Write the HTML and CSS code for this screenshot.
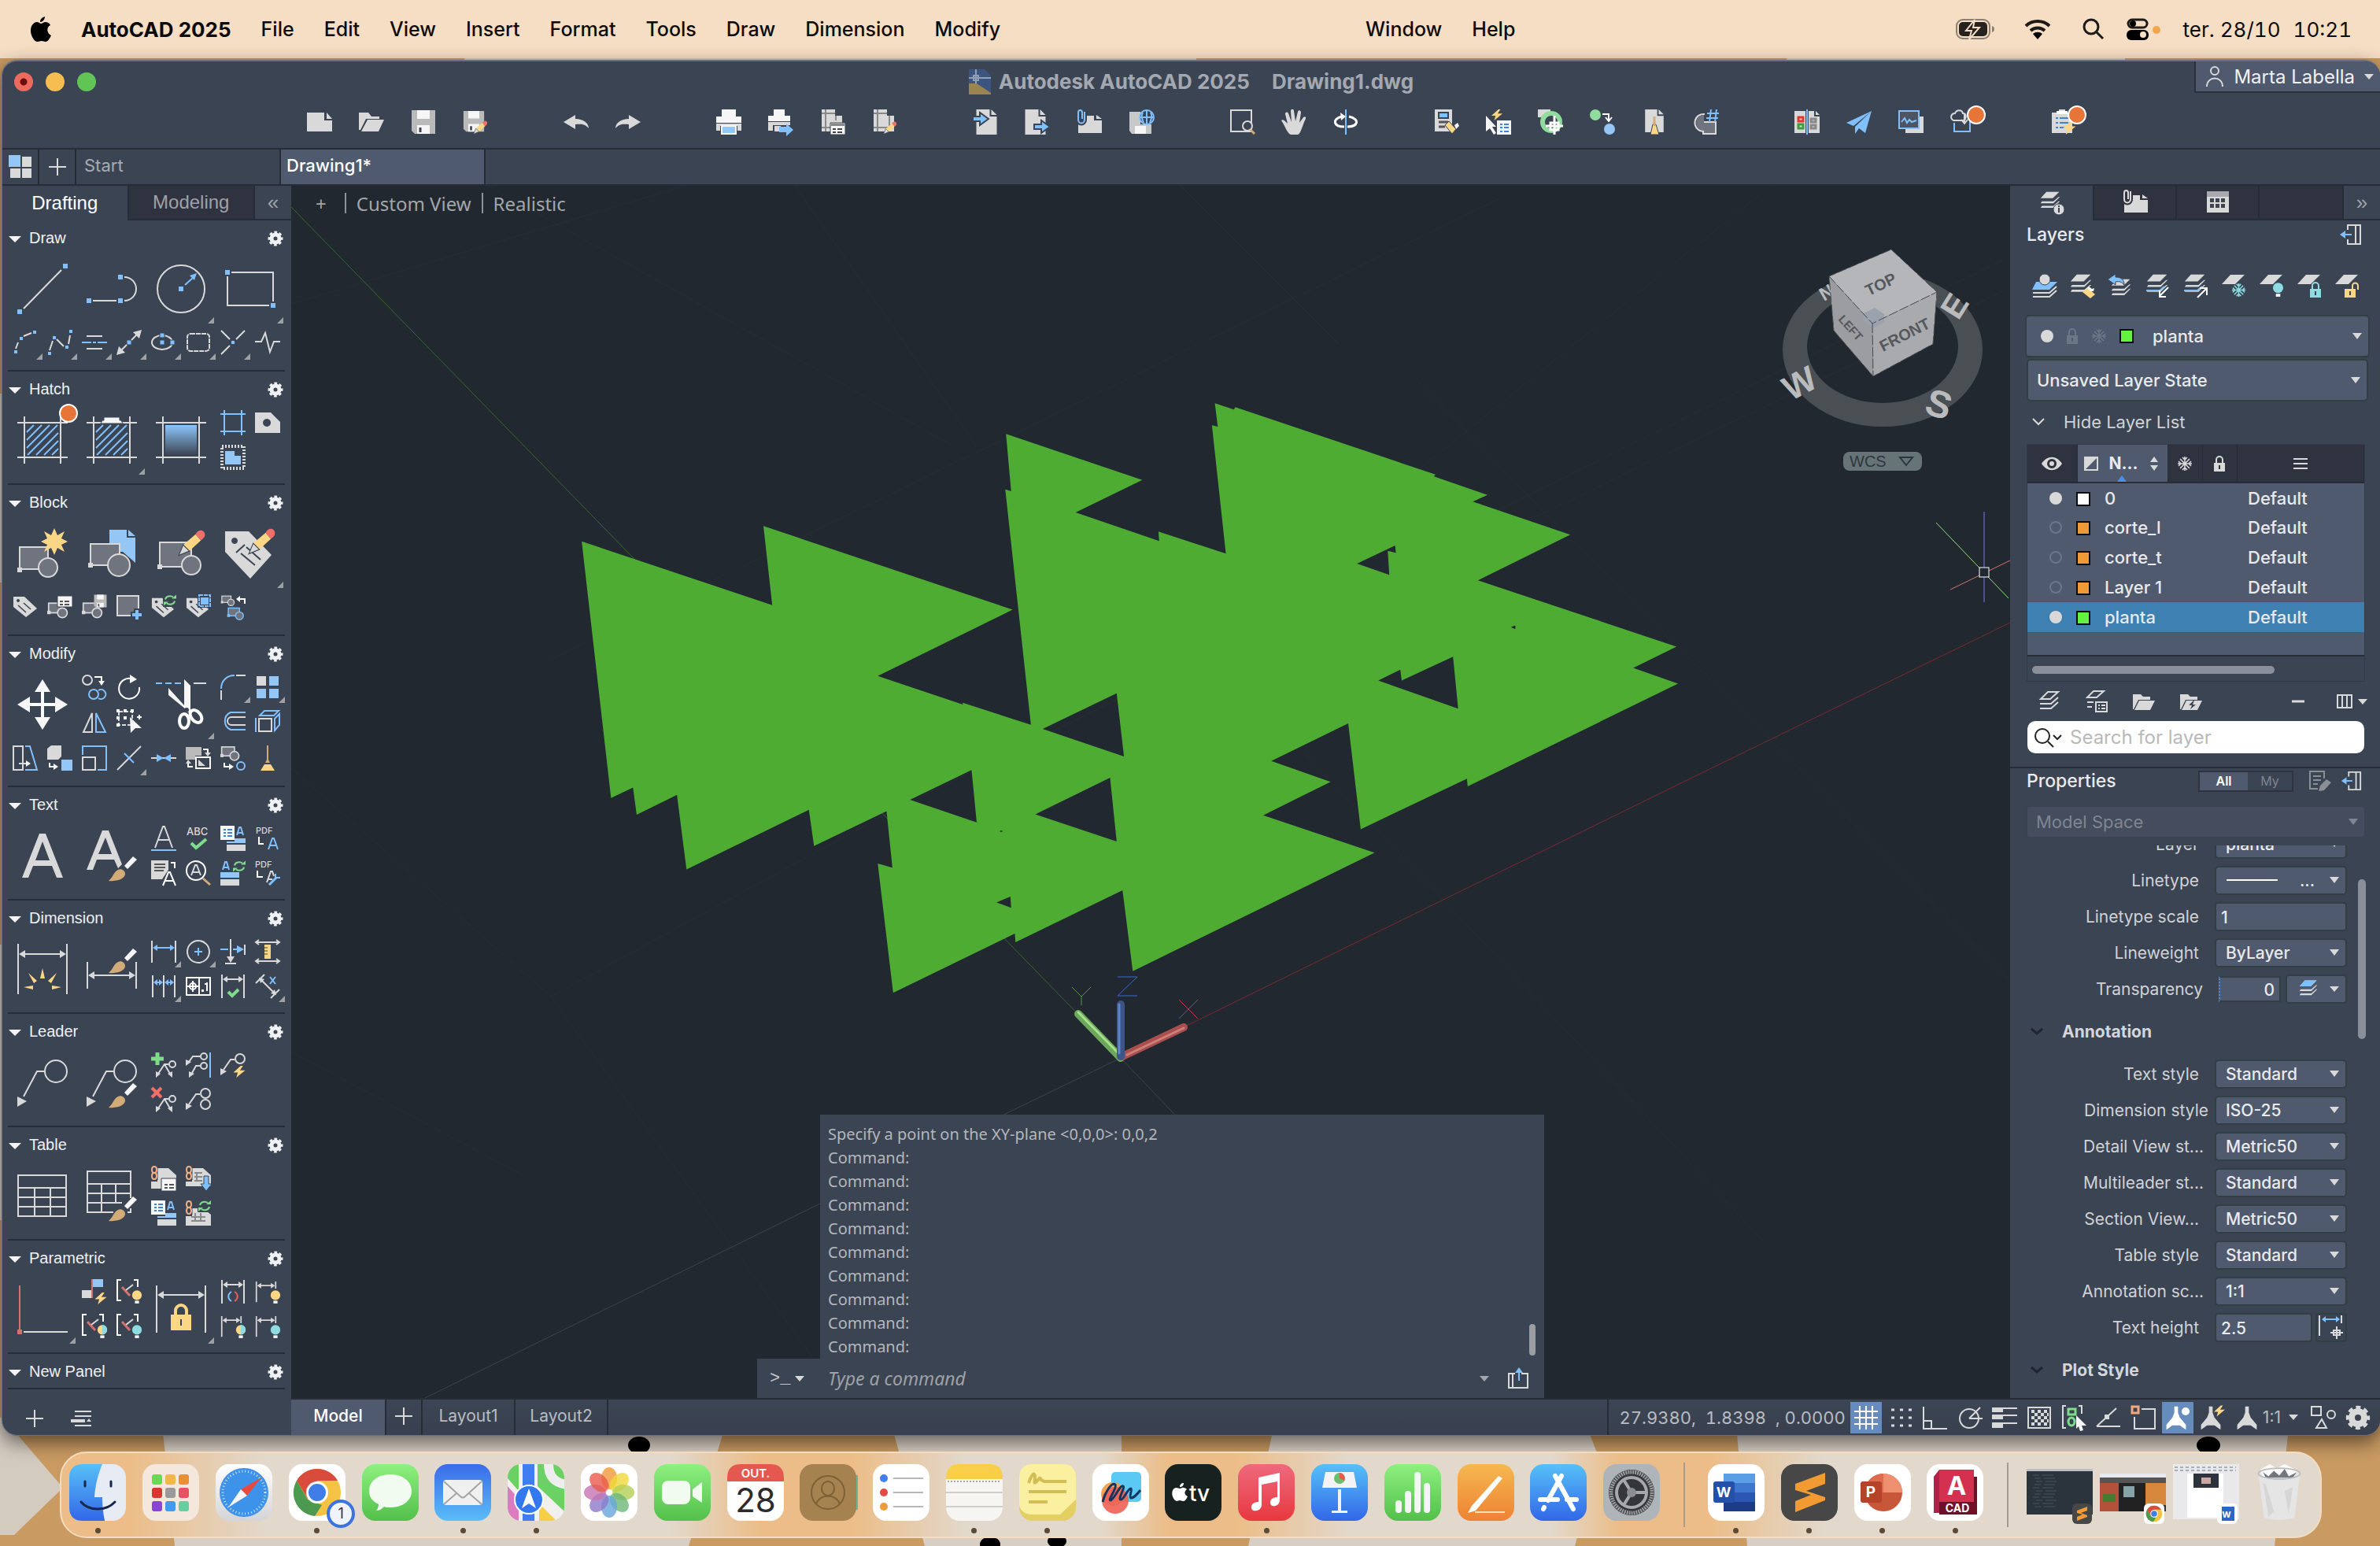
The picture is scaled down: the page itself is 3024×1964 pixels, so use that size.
FILE: index.html
```html
<!DOCTYPE html>
<html lang="pt">
<head>
<meta charset="utf-8">
<title>Autodesk AutoCAD 2025 - Drawing1.dwg</title>
<link rel="stylesheet" href="styles.css">
</head>
<body>
<svg class="defs" aria-hidden="true">
  <symbol id="gear" viewBox="0 0 20 20"><circle cx="10" cy="10" r="5" fill="none" stroke="currentColor" stroke-width="5"/><circle cx="10" cy="10" r="8" fill="none" stroke="currentColor" stroke-width="3" stroke-dasharray="3.6 2.68" stroke-dashoffset="1.8"/></symbol>
  <symbol id="brush" viewBox="0 0 36 32"><path class="fi-t" d="M0 31C6 26 6 20 12 17c4-2 9 1 9 5 0 7-12 10-21 9z"/><path class="fi-w" d="M20 12L31 0l5 4-12 12z"/></symbol>
  <symbol id="pencil" viewBox="0 0 32 32"><path class="fi-y" d="M6 17L20 5l6 7-13 12z"/><path class="fi-r" d="M20 5c3-5 7-5 9-3s3 6-3 10z"/><path fill="#d9d9d9" stroke="#3b4453" d="M6 17l7 7-12 5z"/></symbol>
  <symbol id="floppy" viewBox="0 0 32 32"><path fill="#bababa" d="M1 1h30v30H5l-4-4z"/><path class="fi-w" d="M8 1h16v11H8zM8 20h16v11H8z"/><path stroke="#3b4453" stroke-width="3" d="M12 23v6"/></symbol>
  <symbol id="sync" viewBox="0 0 16 14"><g fill="none" stroke="#7edc8b" stroke-width="2"><path d="M2 6a6 5 0 0 1 10-3M14 8a6 5 0 0 1-10 3"/></g><path fill="#7edc8b" d="M10 5h6V0zM6 9H0v5z"/></symbol>
  <symbol id="bolt" viewBox="0 0 16 16"><path class="fi-y" d="M10 0L0 9h6l-2 7L16 6H9l4-6z"/></symbol>
  <symbol id="block" viewBox="0 0 32 24"><rect x="2" y="2" width="20" height="14" fill="#70747f" stroke="currentColor" stroke-width="2"/><circle cx="22" cy="16" r="7" fill="#70747f" stroke="currentColor" stroke-width="2"/><path fill="currentColor" d="M0 13h5v5H0z"/></symbol>
  <symbol id="doc" viewBox="0 0 26 32"><path class="fi" d="M0 0h17v9h9v23H0zM19 0l7 7h-7z"/></symbol>
  <symbol id="tag" viewBox="0 0 32 28"><path class="fi" fill-rule="evenodd" d="M1 1h14l16 15-14 11L1 14zM7 4a2 2 0 1 0 .1 0z"/><path stroke="#3b4453" stroke-width="1.5" d="M7 12l10 9M14 9l9 8"/></symbol>
  <symbol id="layers" viewBox="0 0 32 32"><path class="fi" d="M10 2h20L20 12H1zM3 17h18l8-7h2L21 20H1zM3 24h18l8-7h2L21 27H1z"/></symbol>
  <symbol id="snow" viewBox="0 0 20 20"><g fill="none" stroke="currentColor" stroke-width="1.6"><path d="M10 1v18M1 10h18M4 4l12 12M16 4L4 16M7 2l3 3 3-3M7 18l3-3 3 3M2 7l3 3-3 3M18 7l-3 3 3 3"/></g></symbol>
  <symbol id="lock" viewBox="0 0 16 20"><path fill="currentColor" fill-rule="evenodd" d="M1 9h14v11H1zM7 12v5h2v-5z"/><path fill="none" stroke="currentColor" stroke-width="2" d="M4 9V5a4 4 0 0 1 8 0v4"/></symbol>
  <symbol id="bulb" viewBox="0 0 16 20"><circle cx="8" cy="7" r="7" fill="currentColor"/><path class="fi-w" d="M5 15h6v4H5z"/></symbol>
  <symbol id="span" viewBox="0 0 32 32"><path class="ln" d="M2 1v30M30 1v30M6 7h20"/><path class="fi" d="M3 7l6-4v8zM29 7l-6-4v8z"/></symbol>
  <symbol id="exit" viewBox="0 0 28 28"><path class="ln" d="M10 8V2h16v24H10v-6M20 2v24"/><path class="ln-b" d="M6 14h9"/><path class="fi-b" d="M0 14l7-5v10z"/></symbol>
  <symbol id="grid" viewBox="0 0 64 64"><path class="ln" d="M9 2v60M55 2v60M0 10h64M0 54h64"/></symbol>
  <symbol id="person" viewBox="0 0 32 40"><path fill="currentColor" d="M13 1h6v10l3 8 10 12v8l-10-7H10L0 39v-8l10-12 3-8z"/></symbol>
  <symbol id="chrome" viewBox="0 0 64 64"><circle cx="32" cy="32" r="30" fill="#f6c244"/><path fill="#d94b3d" d="M32 2A30 30 0 0 1 58 17H32L20 40 6 17A30 30 0 0 1 32 2z"/><path fill="#4c9a50" d="M6 17l14 24 18 7-9 14A30 30 0 0 1 6 17z"/><circle cx="32" cy="32" r="14" fill="#fff"/><circle cx="32" cy="32" r="11" fill="#3f7ee8"/></symbol>
  <linearGradient id="gGreen" x2="0" y2="1"><stop stop-color="#8ef07f"/><stop offset="1" stop-color="#52c04a"/></linearGradient>
  <linearGradient id="gBlue" x2="0" y2="1"><stop stop-color="#3a6be8"/><stop offset="1" stop-color="#5bbdf8"/></linearGradient>
  <linearGradient id="gSky" x2="0" y2="1"><stop stop-color="#56c0f8"/><stop offset="1" stop-color="#3367e8"/></linearGradient>
  <linearGradient id="gRed" x2="0" y2="1"><stop stop-color="#ee6a7d"/><stop offset="1" stop-color="#e8383f"/></linearGradient>
  <linearGradient id="gOrange" x2="0" y2="1"><stop stop-color="#f6b84f"/><stop offset="1" stop-color="#ee8233"/></linearGradient>
  <linearGradient id="gWhite" x2="0" y2="1"><stop stop-color="#fff"/><stop offset="1" stop-color="#d4d4d6"/></linearGradient>
  <linearGradient id="gHatch" x2="0" y2="1"><stop stop-color="#8cc6fb"/><stop offset="1" stop-color="#3b4453"/></linearGradient>
</svg>

<svg class="wallpaper" viewBox="0 0 3024 1964" preserveAspectRatio="none" aria-hidden="true">
  <rect width="3024" height="1964" fill="#c99a62"/>
  <path fill="#d4cbbf" d="M590 70h930v10H590zM2270 70h430v10h-430zM0 500h10v240H0zM0 1200h10v350H0zM0 1800l20 20 60 70-62 60H0z"/>
  <path fill="#d8cfc4" d="M205 1800h720l-50 164H222zM1130 1800h295v164h-250zM1621 1800h390l20 50-30 114h-415zM2205 1800h705l-20 164h-670z"/>
  <g><ellipse cx="812" cy="1836" rx="14" ry="11"/><ellipse cx="2806" cy="1836" rx="15" ry="11"/><ellipse cx="1258" cy="1962" rx="13" ry="10"/><ellipse cx="1343" cy="1958" rx="12" ry="8"/></g>
</svg>

<nav class="menubar" aria-label="Menu">
  <button class="apple" aria-label="Apple"><svg width="26" height="32" viewBox="0 0 26 32"><path d="M18 0c0 4-3 7-6 7 0-4 3-6 6-7zM13 9c2 0 3-2 6-2 2 0 5 1 6 4-6 3-4 11 1 13-2 4-4 8-7 8-2 0-3-1-5-1s-4 1-5 1C4 32 0 24 0 18c0-7 4-11 8-11 2 0 4 2 5 2z"/></svg></button>
  <button class="appname">AutoCAD 2025</button><button>File</button><button>Edit</button><button>View</button><button>Insert</button><button>Format</button><button>Tools</button><button>Draw</button><button>Dimension</button><button>Modify</button>
  <span class="notch"></span>
  <button>Window</button><button>Help</button>
  <div class="menu-extras">
    <svg width="50" height="26" viewBox="0 0 50 26"><rect x="1" y="1" width="42" height="24" rx="8" fill="none" stroke="#8c8073" stroke-width="2"/><rect x="4" y="4" width="36" height="18" rx="5" fill="#26221e"/><path fill="#26221e" stroke="#f5dec3" stroke-width="2" d="M24 1L13 15h7l-3 11 13-15h-8z"/><path fill="#8c8073" d="M46 9c4 1 4 7 0 8z"/></svg>
    <svg class="wifi" width="34" height="26" viewBox="0 0 34 26"><g fill="none" stroke="#1d1a17" stroke-width="4"><path d="M2 9a22 22 0 0 1 30 0M8 15a13 13 0 0 1 18 0"/></g><path d="M11 19a9 9 0 0 1 12 0l-6 7z"/></svg>
    <svg class="find" width="28" height="28" viewBox="0 0 28 28"><circle cx="11" cy="11" r="9" fill="none" stroke="#1d1a17" stroke-width="3"/><path stroke="#1d1a17" stroke-width="3" d="M18 18l8 8"/></svg>
    <svg class="cc" width="42" height="28" viewBox="0 0 42 28"><rect x="2" y="2" width="24" height="10" rx="5" fill="none" stroke="#1d1a17" stroke-width="3"/><circle cx="8" cy="7" r="4"/><rect y="15" width="28" height="13" rx="6"/><circle cx="21" cy="21" r="4" fill="#f5dec3"/><circle cx="38" cy="15" r="5" fill="#f2a64c"/></svg>
    <time class="clock"><span>ter. 28/10</span><span>10:21</span></time>
  </div>
</nav>

<main class="window">
  <header class="titlebar">
    <div class="lights"><button class="light close" aria-label="Close"></button><button class="light min" aria-label="Minimize"></button><button class="light max" aria-label="Zoom"></button></div>
    <h1 class="title"><svg width="28" height="32" viewBox="0 0 28 32"><path fill="#3b5580" d="M0 0h20l8 8v22L10 18H0z"/><path fill="#9b8450" d="M0 18h10l18 12v2H0z"/><path fill="none" stroke="#8fa0b5" stroke-width="2" d="M9 0v18M0 11h28M6 8h6v6H6z"/></svg><span>Autodesk AutoCAD 2025</span><span class="file">Drawing1.dwg</span></h1>
    <button class="user"><svg width="24" height="28" viewBox="0 0 24 28"><circle class="ln" cx="12" cy="7" r="5"/><path class="ln" d="M2 27c0-14 20-14 20 0"/></svg>Marta Labella<i class="caret"></i></button>
  </header>

  <div class="toolbar" role="toolbar" aria-label="Quick access">
    <div class="tgroup">
      <button aria-label="New"><svg viewBox="0 0 32 32"><path class="fi" d="M0 4h22v10h10v14H0zM25 4l7 8h-7z"/></svg></button>
      <button aria-label="Open"><svg viewBox="0 0 32 32"><path class="fi" d="M0 4h12l4 5h10v3H9L2 26H0zM11 13h21l-7 15H3z"/></svg></button>
      <button aria-label="Save"><svg viewBox="0 0 32 32"><use href="#floppy"/></svg></button>
      <button aria-label="Save as"><svg viewBox="0 0 32 32"><use href="#floppy" width="28" height="30"/><use href="#pencil" x="13" y="14" width="19" height="19"/></svg></button>
    </div>
    <div class="tgroup">
      <button aria-label="Undo"><svg viewBox="0 0 32 32"><path class="fi" d="M0 16L15 7v5c10 0 17 5 17 12-4-5-8-6-17-5v6z"/></svg></button>
      <button aria-label="Redo"><svg viewBox="0 0 32 32"><path class="fi" d="M32 16L17 7v5C7 12 0 17 0 24c4-5 8-6 17-5v6z"/></svg></button>
    </div>
    <div class="tgroup">
      <button aria-label="Plot"><svg viewBox="0 0 32 32"><path class="fi-w" d="M7 0h18v9h7v8H0V9h7z"/><path class="fi" d="M0 18h32v9h-5v-6H5v6H0z"/><path class="fi-w" d="M6 20h20v12H6z"/><path class="fi-l" d="M8 22h16v8H8z"/></svg></button>
      <button aria-label="Batch plot"><svg viewBox="0 0 32 32"><path class="fi-w" d="M7 0h14v8h7v7H0V8h7z"/><path class="fi" d="M0 16h28v4H6v7H0zM8 21h8v7H8z"/><path class="fi-b" d="M14 22h9v-4l9 8-9 8v-5h-9z"/></svg></button>
      <button aria-label="Page setup"><svg viewBox="0 0 32 32"><path class="fi" d="M2 0h17v8h9v20H2z"/><path stroke="#8a8a8a" stroke-width="2" d="M7 0v28M2 5h17M2 23h12M20 8v6"/><path class="fi-w" stroke="#3b4453" d="M13 17h19v15H13z"/><path fill="#888" d="M14 18h17v3H14z"/><path stroke="#444" stroke-width="2" stroke-dasharray="4 2 6" d="M16 25h12M16 29h12"/></svg></button>
      <button aria-label="Page edit"><svg viewBox="0 0 32 32"><path class="fi" d="M2 0h17v8h9v20H2z"/><path stroke="#8a8a8a" stroke-width="2" d="M7 0v28M2 5h17M2 23h24M22 8v16"/><use href="#pencil" x="14" y="15" width="18" height="18"/></svg></button>
    </div>
    <div class="tgroup">
      <button aria-label="Import"><svg viewBox="0 0 32 32"><use href="#doc" x="4" width="27" height="32"/><path class="fi-b" stroke="#3b4453" stroke-width="2" d="M0 9h9V4l11 8-11 8v-5H0z"/></svg></button>
      <button aria-label="Export"><svg viewBox="0 0 32 32"><use href="#doc" width="27" height="32"/><path class="fi-b" stroke="#3b4453" stroke-width="2" d="M12 19h9v-5l11 8-11 8v-5h-9z"/></svg></button>
      <button aria-label="Attach"><svg viewBox="0 0 32 32"><path class="fi" d="M2 18h8V8h12v6h10v16H2zM25 7l7 5h-7z"/><path fill="none" stroke="#3b4453" stroke-width="6" d="M10 3v10c0 6-8 6-8 0V4"/><path class="ln-b" d="M10 3v10c0 6-8 6-8 0V4c0-4 5-4 5 0v8"/></svg></button>
      <button aria-label="Save to web"><svg viewBox="0 0 32 32"><path fill="#c8c8c8" d="M1 3h14v16h14v12H4l-3-4z"/><path class="fi-w" d="M8 21h14v10H8z"/><circle cx="23" cy="10" r="9" fill="#3b4453" stroke="#80c0ff" stroke-width="2"/><path class="ln-b" d="M23 1v18M14 10h18M18 4c-3 5 0 10 1 13M28 4c3 5 0 10-1 13"/></svg></button>
    </div>
    <div class="tgroup">
      <button aria-label="Zoom window"><svg viewBox="0 0 32 32"><rect class="ln" x="2" y="1" width="26" height="27"/><circle cx="23" cy="21" r="6" fill="#3b4453" stroke="#d9d9d9" stroke-width="2"/><path stroke="#d2ab78" stroke-width="3" d="M27 26l5 5"/></svg></button>
      <button aria-label="Pan"><svg viewBox="0 0 32 32"><path class="fi" d="M0 14c2-2 4 0 8 4L5 6c0-3 3-3 4-1l4 11-1-14c0-3 4-3 4 0l2 13 3-12c1-3 4-2 4 1l-2 13 5-7c2-2 4 0 3 2-4 7-6 19-10 20H12C7 30 5 21 0 14z"/></svg></button>
      <button aria-label="Orbit"><svg viewBox="0 0 32 32"><path class="ln-b" d="M16 0v32"/><path fill="none" stroke="#fff" stroke-width="3" d="M11 9C-2 12 0 22 14 22M20 9c14 3 12 13-2 13"/><path class="fi-w" d="M9 4l7 5-6 5z"/></svg></button>
    </div>
    <div class="tgroup">
      <button aria-label="Properties match"><svg viewBox="0 0 32 32"><path class="fi" d="M1 0h22v28H1z"/><path class="fi-b" stroke="#3b4453" stroke-width="2" d="M6 4h12v7H6z"/><path stroke="#555" stroke-width="3" d="M6 16h12M6 22h8"/><path class="fi-y" stroke="#3b4453" d="M14 20l5-5 9 10-5 6z"/><path class="fi-w" d="M26 20l4-3 2 4-4 4z"/></svg></button>
      <button aria-label="Quick select"><svg viewBox="0 0 32 32"><use href="#bolt" x="6" width="16" height="14"/><path class="fi-w" d="M0 8l13 14H8l5 8-3 2-5-8-5 4z"/><path class="fi-w" d="M14 14h18v18H14z"/><path class="dash-b" d="M18 19h11M18 23h11M18 28h11"/></svg></button>
      <button aria-label="Geographic location"><svg viewBox="0 0 32 32"><path class="fi" d="M0 0h16v10H0z"/><circle cx="17" cy="16" r="11" fill="#3b4453" stroke="#8fdc9c" stroke-width="6"/><path stroke="#fff" stroke-width="3" d="M21 8v24M10 21h22M16 17h10v9H16z" fill="none"/></svg></button>
      <button aria-label="Convert"><svg viewBox="0 0 32 32"><circle cx="7" cy="7" r="7" fill="#8fdc9c"/><circle cx="25" cy="25" r="7" class="fi-l"/><path fill="none" stroke="#fff" stroke-width="2" d="M16 6h8v8M20 10l4 5 4-5"/></svg></button>
      <button aria-label="Purge"><svg viewBox="0 0 32 32"><use href="#doc" x="2" width="28" height="29"/><path class="fi-y" stroke="#3b4453" d="M11 32l3-13h4l4 13z"/><path stroke="#d2ab78" stroke-width="3" d="M16 9v12"/></svg></button>
      <button aria-label="Count"><svg viewBox="0 0 32 32"><path class="ln" d="M14 6a11 11 0 1 0 9 14M12 16h16v15H12z"/><path fill="#70747f" d="M13 7a10 10 0 0 0 0 20zM13 17h14v13H13z"/><path stroke="#3b4453" stroke-width="14" d="M25 0v15"/><path class="ln-b" d="M22 0l-2 16M29 0l-2 16M17 5h15M16 11h15"/></svg></button>
    </div>
    <div class="tgroup">
      <button aria-label="Compare"><svg viewBox="0 0 32 32"><path class="fi" d="M0 2h14v28H0zM18 2h7v7h7v21H18zM27 2l5 5h-5z"/><path stroke="#80c0ff" stroke-width="2" d="M16 0v32"/><path fill="none" stroke="#e4352c" stroke-width="3" d="M5 10h6v5H5z"/><path fill="none" stroke="#3c9b3c" stroke-width="3" d="M5 19h6v5H5z"/><path fill="none" stroke="#888" stroke-width="3" d="M21 12h6v4h-6zM21 20h6v4h-6z"/></svg></button>
      <button aria-label="Share"><svg viewBox="0 0 32 32"><path class="fi-b" d="M32 2L0 17l9 4zM32 2L11 22v9l5-7 8 6z"/></svg></button>
      <button aria-label="Traces"><svg viewBox="0 0 32 32"><path class="fi" d="M9 9h23v21H9z"/><path fill="#4d5563" stroke="#80c0ff" stroke-width="2" d="M1 2h25v22H1z"/><path class="ln-b" d="M4 16l4-5 3 6 3-4 3 3 6-2"/></svg></button>
      <button class="dot" aria-label="Cloud import"><svg viewBox="0 0 32 32"><path class="ln" d="M4 14c-5-3-3-9 2-9 2-5 9-5 10 0 5 0 5 8 0 9z"/><path class="ln-b" d="M5 17v11h20V10"/><path class="ln" d="M18 5v12M14 13l4 5 4-5"/></svg></button>
    </div>
    <div class="tgroup">
      <button class="dot" aria-label="Activity insights"><svg viewBox="0 0 32 32"><path class="fi" d="M1 4h9V0h8v4h9v26H1z"/><path stroke="#fff" stroke-width="4" d="M7 4h14"/><path class="dash-b" d="M6 11h16M6 17h16M6 23h12"/><use href="#bolt" x="14" y="15" width="18" height="17"/></svg></button>
    </div>
  </div>

  <div class="doctabs">
    <button class="dt-icon" aria-label="All drawings"><svg width="30" height="30" viewBox="0 0 30 30"><path class="fi-l" d="M0 0h15v15H0z"/><path class="fi" d="M17 2h12v13H17zM2 17h13v12H2zM17 17h12v12H17z"/></svg></button>
    <button class="dt-icon" aria-label="New drawing"><svg width="22" height="22" viewBox="0 0 22 22"><path class="ln" d="M11 0v22M0 11h22"/></svg></button>
    <button class="dt">Start</button>
    <button class="dt on">Drawing1*</button>
  </div>

  <div class="work">
    <aside class="tools">
      <div class="ttabs"><button class="on">Drafting</button><button>Modeling</button><button class="fold" aria-label="Collapse">«</button></div>

      <section><h2>Draw<svg><use href="#gear"/></svg></h2>
        <div class="cells">
          <button class="big" aria-label="Line"><svg viewBox="0 0 64 64"><path class="ln" d="M8 57L56 8"/><path class="fi-b" d="M0 58h6v6H0zM58 0h6v6h-6z"/></svg></button>
          <button class="big" aria-label="Polyline"><svg viewBox="0 0 64 64"><path class="ln" d="M8 47h30M48 17a15 15 0 0 1 0 30"/><path class="fi-b" d="M0 44h6v6H0zM40 44h6v6h-6zM40 14h6v6h-6z"/></svg></button>
          <button class="big fly" aria-label="Circle"><svg viewBox="0 0 64 64"><circle class="ln" cx="32" cy="32" r="30"/><path class="ln-b" d="M37 27l10-9"/><path class="fi-b" d="M29 29h6v6h-6zM52 12l-3 9-6-6z"/></svg></button>
          <button class="big fly" aria-label="Rectangle"><svg viewBox="0 0 64 64"><path class="ln" d="M8 11h53v37M3 16v37h53"/><path class="fi-b" d="M0 8h6v6H0zM58 50h6v6h-6z"/></svg></button>
          <button class="fly" aria-label="Arc"><svg viewBox="0 0 32 32"><path class="ln" d="M4 24l3-8M14 8l10-4"/><path class="fi-b" d="M2 26h4v4H2zM9 9h4v4H9zM26 1h4v4h-4z"/></svg></button>
          <button class="fly" aria-label="Spline"><svg viewBox="0 0 32 32"><path class="ln" d="M3 26l4-12M12 12l9 9M27 18l2-11"/><path class="fi-b" d="M1 28h4v4H1zM7 8h4v4H7zM23 20h4v4h-4zM28 0h4v4h-4z"/></svg></button>
          <button class="fly" aria-label="Multiline"><svg viewBox="0 0 32 32"><path class="ln" d="M6 8h20M6 24h20"/><path class="ln-b" stroke-dasharray="12 2 4 2" d="M0 16h32"/></svg></button>
          <button class="fly" aria-label="Ray"><svg viewBox="0 0 32 32"><path class="ln" d="M6 26L26 6"/><path class="fi" d="M0 32l3-11 8 8zM32 0l-3 11-8-8z"/><path class="fi-b" stroke="#3b4453" d="M13 13h6v6h-6z"/></svg></button>
          <button class="fly" aria-label="Ellipse"><svg viewBox="0 0 32 32"><ellipse class="ln" cx="14" cy="16" rx="13" ry="9"/><path class="fi-b" stroke="#3b4453" d="M11 4h6v6h-6zM11 13h6v6h-6zM24 13h6v6h-6z"/></svg></button>
          <button class="fly" aria-label="Revision cloud"><svg viewBox="0 0 32 32"><rect class="ln" x="2" y="5" width="28" height="22" rx="4" stroke-dasharray="6 1"/></svg></button>
          <button class="fly" aria-label="Construction"><svg viewBox="0 0 32 32"><path class="ln" d="M1 1l11 11M31 1L20 12M1 31l11-11"/><path class="fi-b" d="M14 14h4v4h-4z"/></svg></button>
          <button aria-label="Break line"><svg viewBox="0 0 32 32"><path class="ln" d="M0 15h8l5-11 6 24 5-13h8"/></svg></button>
        </div></section>

      <section><h2>Hatch<svg><use href="#gear"/></svg></h2>
        <div class="cells">
          <button class="big dot2" aria-label="Hatch"><svg viewBox="0 0 64 64"><use href="#grid"/><path class="ln-b" d="M12 22l9-9M12 32l19-19M12 42l29-29M13 51l38-38M24 51l28-28M34 51l18-18M44 51l8-8"/></svg></button>
          <button class="big fly" aria-label="Hatch edit"><svg viewBox="0 0 64 64"><use href="#grid"/><path class="ln-b" d="M12 22l9-9M12 32l19-19M12 42l29-29M13 51l38-38M24 51l28-28M34 51l18-18M44 51l8-8"/><path class="fi-w" stroke="#3b4453" d="M18 11l2-4h2V3h20v4h2l2 4z"/></svg></button>
          <button class="big" aria-label="Gradient"><svg viewBox="0 0 64 64"><path fill="url(#gHatch)" d="M12 13h40v38H12z"/><use href="#grid"/></svg></button>
          <button aria-label="Boundary"><svg viewBox="0 0 32 32"><path class="ln-b" d="M5 0v32M27 0v32M0 5h32M0 27h32"/></svg></button>
          <button aria-label="Wipeout"><svg viewBox="0 0 32 32"><path class="fi" fill-rule="evenodd" d="M0 3h20l12 12v14H0zM15 11a5 5 0 1 0 .1 0z"/></svg></button>
          <button aria-label="Region"><svg viewBox="0 0 32 32"><rect x="2" y="2" width="28" height="28" fill="none" stroke="#d9d9d9" stroke-width="4" stroke-dasharray="2 2"/><path class="fi-l" d="M6 8h12v6h8v11H6z"/></svg></button>
        </div></section>

      <section><h2>Block<svg><use href="#gear"/></svg></h2>
        <div class="cells">
          <button class="big" aria-label="Create block"><svg viewBox="0 0 64 64"><rect x="3" y="24" width="36" height="28" fill="#70747f" stroke="#d9d9d9" stroke-width="2"/><circle cx="39" cy="50" r="12" fill="#70747f" stroke="#d9d9d9" stroke-width="2"/><path class="fi" d="M0 50h6v6H0z"/><path class="fi-y" d="M47 0l4 9 9-5-4 9 8 4-8 4 4 9-9-5-4 9-4-9-9 5 4-9-8-4 8-4-4-9 9 5z"/></svg></button>
          <button class="big" aria-label="Insert block"><svg viewBox="0 0 64 64"><path class="fi-l" d="M29 2h22v10h11v32l-16-14H29zM53 2l9 8h-9z"/><rect x="5" y="20" width="37" height="27" fill="#70747f" stroke="#d9d9d9" stroke-width="2"/><circle cx="41" cy="47" r="14" fill="#70747f" stroke="#d9d9d9" stroke-width="2"/><path class="fi" d="M2 44h6v6H2z"/></svg></button>
          <button class="big" aria-label="Edit block"><svg viewBox="0 0 64 64"><rect x="5" y="18" width="40" height="31" fill="#70747f" stroke="#d9d9d9" stroke-width="2"/><circle cx="45" cy="47" r="12" fill="#70747f" stroke="#d9d9d9" stroke-width="2"/><path class="fi" d="M2 46h6v6H2z"/><use href="#pencil" x="28" y="2" width="36" height="36"/></svg></button>
          <button class="big fly" aria-label="Define attribute"><svg viewBox="0 0 64 64"><path class="fi" fill-rule="evenodd" d="M0 4h30l29 30-27 30L0 30zM12 12a4 4 0 1 0 .1 0z"/><path stroke="#3b4453" stroke-width="2" d="M14 31l11-10M20 32l18 15M27 24l18 16"/><use href="#pencil" x="29" y="0" width="36" height="36"/></svg></button>
          <button aria-label="Attribute"><svg viewBox="0 0 32 32"><use href="#tag" y="2" width="32" height="28"/></svg></button>
          <button aria-label="Attribute manager"><svg class="c" viewBox="0 0 32 32"><use href="#block" y="8" width="28" height="24"/><path class="fi-w" stroke="#3b4453" d="M13 2h19v14H13z"/><path stroke="#555" stroke-width="2" stroke-dasharray="4 2 6" d="M16 9h12M16 13h12"/></svg></button>
          <button aria-label="Write block"><svg class="c" viewBox="0 0 32 32"><use href="#block" y="8" width="28" height="24"/><use href="#floppy" x="15" width="17" height="17"/></svg></button>
          <button aria-label="Base point"><svg viewBox="0 0 32 32"><rect x="1" y="2" width="27" height="25" fill="#70747f" stroke="#d9d9d9" stroke-width="2"/><path stroke="#3b4453" stroke-width="8" d="M26 18v14M18 26h14"/><path stroke="#80c0ff" stroke-width="4" d="M26 20v12M20 26h12"/></svg></button>
          <button aria-label="Sync attributes"><svg viewBox="0 0 32 32"><use href="#tag" y="3" width="30" height="28"/><path fill="#3b4453" d="M15 0h17v16H15z"/><use href="#sync" x="16" y="0" width="16" height="15"/></svg></button>
          <button aria-label="Retain display"><svg viewBox="0 0 32 32"><use href="#tag" y="3" width="30" height="28"/><path fill="#3b4453" d="M15 0h17v17H15z"/><path class="fi-b" d="M19 4h10v9H19z"/><path class="ln-b" stroke-dasharray="5 1" d="M17 1h14v14H17z"/></svg></button>
          <button aria-label="Replace block"><svg class="c" viewBox="0 0 32 32"><use href="#block" y="1" width="20" height="14"/><use class="cb" href="#block" x="8" y="16" width="24" height="17"/><path class="ln-w" d="M22 6h9v6"/><path class="fi-w" d="M20 6l5-4v8z"/></svg></button>
        </div></section>

      <section><h2>Modify<svg><use href="#gear"/></svg></h2>
        <div class="cells">
          <button class="big" aria-label="Move"><svg viewBox="0 0 64 64"><path stroke="#fff" stroke-width="4" d="M32 8v48M8 32h48"/><path class="fi-w" d="M32 0l10 16H22zM32 64l10-16H22zM0 32l16-10v20zM64 32L48 22v20z"/></svg></button>
          <button aria-label="Copy"><svg viewBox="0 0 32 32"><circle class="ln" cx="7" cy="7" r="6"/><circle class="ln-b" cx="15" cy="25" r="6"/><path class="ln-b" d="M21 20a6 6 0 1 1 0 10"/><path class="ln-w" d="M16 3h9v9"/><path class="fi-w" d="M21 8h8l-4 6z"/></svg></button>
          <button aria-label="Rotate"><svg viewBox="0 0 32 32"><path class="ln-w" d="M19 5A13 13 0 1 0 29 16"/><path class="fi-w" d="M17 0l9 6-9 5z"/></svg></button>
          <button class="big fly" aria-label="Trim"><svg viewBox="0 0 64 64"><path class="ln-b" stroke-dasharray="8 4" d="M0 5h32"/><path class="ln" d="M48 5h16"/><path class="fi-w" d="M36 0l8 8v34h-6V38L16 20v-9l20 22z"/><ellipse cx="36" cy="53" rx="6" ry="9" fill="none" stroke="#fff" stroke-width="4"/><ellipse cx="51" cy="47" rx="6" ry="9" transform="rotate(-40 51 47)" fill="none" stroke="#fff" stroke-width="4"/><circle cx="39" cy="39" r="3" fill="#3b4453"/></svg></button>
          <button class="fly" aria-label="Fillet"><svg viewBox="0 0 32 32"><path class="ln-b" d="M1 18C1 8 8 1 18 1"/><path class="ln" d="M20 1h12M1 20v12"/></svg></button>
          <button class="fly" aria-label="Array"><svg viewBox="0 0 32 32"><path class="fi" d="M2 2h12v12H2z"/><path class="fi-l" d="M18 2h12v12H18zM2 18h12v12H2zM18 18h12v12H18z"/></svg></button>
          <button aria-label="Mirror"><svg viewBox="0 0 32 32"><path class="ln" d="M13 5v24H2z"/><path class="ln-b" d="M18 5v24h12z"/></svg></button>
          <button aria-label="Stretch"><svg viewBox="0 0 32 32"><path class="ln" stroke-dasharray="5 2" d="M3 3h17v17H3z"/><path class="fi-w" d="M0 0h4v4H0zM9 0h4v4H9zM18 0h4v4h-4zM0 9h4v4H0zM9 9h4v4H9zM0 18h4v4H0zM17 10l15 14h-8l-6 6zM26 9h6v2h-6z"/><path class="ln-w" d="M29 7v6"/></svg></button>
          <button aria-label="Offset"><svg viewBox="0 0 32 32"><path class="ln-b" d="M32 4H13a12 12 0 0 0 0 22h19"/><path class="ln" d="M32 10H14a5 5 0 0 0 0 10h18"/></svg></button>
          <button aria-label="Solid edit"><svg viewBox="0 0 32 32"><path class="ln" d="M5 12h16v16H5z"/><path class="ln-b" d="M1 11v18M6 8l6-6h18l-6 6zM25 12l6-6v14l-6 7z"/></svg></button>
          <button aria-label="Taper"><svg viewBox="0 0 32 32"><path class="ln" d="M1 1h12v30H1zM8 23h12"/><path class="ln-b" d="M16 1h6l9 30H16"/><path class="fi-w" d="M17 19l6 4-6 4z"/></svg></button>
          <button aria-label="Change space"><svg viewBox="0 0 32 32"><path class="fi" d="M0 4l5-4h13v14l-4 4H0z"/><path class="fi-l" d="M18 18h14v14H18z"/><path class="ln-w" d="M3 22v5h7"/><path class="fi-w" d="M8 23l6 4-6 4z"/></svg></button>
          <button aria-label="Scale"><svg viewBox="0 0 32 32"><path class="ln" d="M1 15h16v16H1z"/><path class="ln-b" d="M1 12V1h30v30H20"/></svg></button>
          <button class="fly" aria-label="Break"><svg viewBox="0 0 32 32"><path class="ln" d="M1 31L31 1"/><path class="ln-b" d="M10 10l12 12"/></svg></button>
          <button aria-label="Join"><svg viewBox="0 0 32 32"><path class="ln" d="M0 16h32"/><path class="fi-b" d="M7 11l9 5-9 5zM25 11l-9 5 9 5z"/></svg></button>
          <button aria-label="Draw order"><svg viewBox="0 0 32 32"><path fill="#bababa" d="M0 2h20v11H12v5H0z"/><path class="ln-w" d="M13 15h18v14H13zM22 5h6v6M9 27H3v-5"/><path class="fi" d="M16 18l9 8h-9zM24 9h8l-4 5zM0 23h7l-4-5z"/></svg></button>
          <button aria-label="Explode"><svg class="c" viewBox="0 0 32 32"><use href="#block" width="26" height="20"/><circle class="ln-b" cx="26" cy="26" r="5"/><path class="ln-w" d="M5 22v5h8"/><path class="fi-w" d="M11 23l6 4-6 4z"/></svg></button>
          <button aria-label="Overkill"><svg viewBox="0 0 32 32"><path stroke="#d2ab78" stroke-width="2" d="M16 0v19"/><path fill="#d2ab78" d="M13 22l3-6 3 6z"/><path class="fi-y" d="M12 24h8l5 8H7z"/></svg></button>
        </div></section>

      <section><h2>Text<svg><use href="#gear"/></svg></h2>
        <div class="cells">
          <button class="big" aria-label="Multiline text"><svg viewBox="0 0 64 64"><path class="fi" fill-rule="evenodd" d="M6 60L28 4h8l22 56h-8l-6-15H20l-6 15zM23 38h18l-9-24z"/></svg></button>
          <button class="big" aria-label="Text style"><svg viewBox="0 0 64 64"><path class="fi" fill-rule="evenodd" d="M0 50L20 0h8l17 43-5 5-5-11H13L8 50zM15 30h17L24 9z"/><use href="#brush" x="28" y="33" width="36" height="32"/></svg></button>
          <button aria-label="Single line text"><svg viewBox="0 0 32 32"><path class="ln" d="M5 28L15 1h2l10 27M8 18h16"/><path class="ln-b" d="M0 31h32"/></svg></button>
          <button aria-label="Spell check"><svg viewBox="0 0 32 32"><text class="mini" x="1" y="12" font-size="13">ABC</text><path fill="none" stroke="#7edc8b" stroke-width="4" d="M7 22l6 6L26 17"/></svg></button>
          <button aria-label="Text frame"><svg viewBox="0 0 32 32"><path class="fi-w" d="M0 0h18v18H0z"/><path class="dash-b" d="M4 5h11M4 9h11M4 13h11"/><path class="ln-b" d="M21 12l3-10h2l3 10M22 9h6"/><path class="fi-l" d="M8 20h10v-4h14v6H8z"/><path class="fi" d="M8 24h24v8H8z"/></svg></button>
          <button aria-label="PDF to text"><svg viewBox="0 0 32 32"><text class="mini" x="1" y="10" font-size="11">PDF</text><path class="ln-w" d="M5 14v9h6"/><path class="ln-b" d="M17 30l5-14h2l5 14M19 25h8"/></svg></button>
          <button aria-label="Text to mtext"><svg viewBox="0 0 32 32"><path class="fi" d="M0 0h22v12l-8 12H0z"/><path stroke="#555" stroke-width="2" d="M4 5h14M4 9h14M4 13h12"/><path class="ln-w" d="M25 3h5v7M15 32l7-17h2l7 17M18 26h10"/></svg></button>
          <button aria-label="Find text"><svg viewBox="0 0 32 32"><circle class="ln-w" cx="13" cy="13" r="12"/><path class="ln" d="M7 19l5-13h2l5 13M9 15h8"/><path stroke="#d2ab78" stroke-width="3" d="M22 23l9 8"/></svg></button>
          <button aria-label="Update text"><svg viewBox="0 0 32 32"><path class="ln-b" d="M3 12L6 2h2l3 10M4 9h6"/><use href="#sync" x="16" y="0" width="16" height="15"/><path class="fi-l" d="M0 15h24v7H0z"/><path class="fi" d="M0 24h24v8H0z"/></svg></button>
          <button aria-label="PDF settings"><svg viewBox="0 0 32 32"><text class="mini" x="0" y="9" font-size="11">PDF</text><path class="ln-w" d="M3 13v8h7"/><path class="ln" d="M15 28l5-14h2l2 6M17 24h5"/><path stroke="#80c0ff" stroke-width="3" d="M18 31l9-9"/><path class="ln-b" d="M26 17v5h6"/></svg></button>
        </div></section>

      <section><h2>Dimension<svg><use href="#gear"/></svg></h2>
        <div class="cells">
          <button class="big" aria-label="Dimension"><svg viewBox="0 0 64 64"><path class="ln" d="M1 0v64M63 0v64M6 13h52"/><path class="fi" d="M2 13l8-5v10zM62 13l-8-5v10z"/><path class="fi-y" d="M32 31l3 13h-6zM14 37l11 10-4 3zM50 37L39 47l4 3zM8 55l12-2v5zM56 55l-12-2v5z"/></svg></button>
          <button class="big" aria-label="Dimension style"><svg viewBox="0 0 64 64"><path class="ln" d="M1 23v34M63 23v34M6 40h52"/><path class="fi" d="M2 40l8-5v10zM62 40l-8-5v10z"/><use href="#brush" x="28" y="6" width="36" height="32"/></svg></button>
          <button class="fly" aria-label="Linear"><svg viewBox="0 0 32 32"><path class="ln" d="M1 2v28M31 2v28"/><path class="ln-b" d="M5 11h22"/><path class="fi-b" d="M2 11l6-4v8zM30 11l-6-4v8z"/></svg></button>
          <button class="fly" aria-label="Radius"><svg viewBox="0 0 32 32"><circle class="ln" cx="16" cy="16" r="14"/><path class="ln-b" d="M16 11v10M11 16h10"/></svg></button>
          <button aria-label="Adjust space"><svg viewBox="0 0 32 32"><path class="ln" d="M13 0v24M6 31h14M31 7v13"/><path class="ln-b" d="M0 13h10M16 13h8"/><path class="fi-b" d="M21 8l9 5-9 5z"/><path class="fi" d="M8 22h10l-5 8z"/></svg></button>
          <button aria-label="Distance"><svg viewBox="0 0 32 32"><path class="ln" d="M2 4h28M2 28h28M5 1L1 4l4 3M27 1l4 3-4 3M5 25l-4 3 4 3M27 25l4 3-4 3"/><path class="fi-y" d="M12 7h8v18h-8z"/><path stroke="#3b4453" d="M12 11h4M12 15h4M12 19h4"/></svg></button>
          <button class="fly" aria-label="Continue"><svg viewBox="0 0 32 32"><path class="ln" d="M2 2v28M16 2v28M30 2v28"/><path class="ln-b" d="M5 11h8M19 11h8"/><path class="fi-b" d="M3 11l5-4v8zM15 11l-5-4v8zM17 11l5-4v8zM29 11l-5-4v8z"/></svg></button>
          <button aria-label="Tolerance"><svg viewBox="0 0 32 32"><path class="ln-w" d="M1 5h30v22H1zM17 5v22M9 9v14M2 16h14M27 11v11"/><circle class="ln-w" cx="9" cy="16" r="4"/><path class="fi-w" d="M20 20h3v3h-3zM24 12h3v2h-3z"/></svg></button>
          <button aria-label="Inspect"><svg viewBox="0 0 32 32"><use href="#span" width="32" height="32"/><path fill="none" stroke="#7edc8b" stroke-width="4" d="M10 23l5 5 8-8"/></svg></button>
          <button class="fly" aria-label="Aligned"><svg viewBox="0 0 32 32"><path class="ln" d="M1 12L12 1M20 31l11-11M8 8l16 16"/><path class="ln-b" d="M19 4l7 9M26 4l-7 9"/><path class="fi" d="M5 5l7 2-5 5zM27 27l-7-2 5-5z"/></svg></button>
        </div></section>

      <section><h2>Leader<svg><use href="#gear"/></svg></h2>
        <div class="cells">
          <button class="big" aria-label="Multileader"><svg viewBox="0 0 64 64"><path class="ln" d="M8 50l17-32h9"/><circle class="ln" cx="49" cy="18" r="14"/><path class="fi" d="M0 63V50l12 6z"/></svg></button>
          <button class="big" aria-label="Multileader style"><svg viewBox="0 0 64 64"><path class="ln" d="M8 50l17-32h9"/><circle class="ln" cx="49" cy="18" r="14"/><path class="fi" d="M0 63V50l12 6z"/><use href="#brush" x="28" y="33" width="36" height="32"/></svg></button>
          <button aria-label="Add leader"><svg viewBox="0 0 32 32"><path stroke="#7edc8b" stroke-width="5" d="M8 0v16M0 8h16"/><path class="ln" d="M9 27l8-12h5M17 15l7 12"/><circle class="ln" cx="27" cy="15" r="4"/><path class="fi" d="M6 32v-8l6 3zM27 32v-8l-6 3z"/></svg></button>
          <button aria-label="Align leaders"><svg viewBox="0 0 32 32"><path class="ln" d="M4 12l5-7h9M8 26l5-9h5"/><circle class="ln" cx="23" cy="5" r="4"/><circle class="ln" cx="23" cy="17" r="4"/><path class="fi" d="M0 17v-8l7 3zM4 32v-8l7 3z"/><path class="ln-b" d="M31 0v32"/></svg></button>
          <button aria-label="Quick leader"><svg viewBox="0 0 32 32"><path class="ln" d="M4 22l9-13h5"/><circle class="ln" cx="25" cy="8" r="6"/><path class="fi" d="M0 29v-9l8 4z"/><use href="#bolt" x="16" y="17" width="16" height="15"/></svg></button>
          <button class="c5" aria-label="Remove leader"><svg viewBox="0 0 32 32"><path stroke="#ef6f6a" stroke-width="4" d="M1 1l12 12M13 1L1 13"/><path class="ln" d="M9 27l8-12h5M17 15l7 12"/><circle class="ln" cx="27" cy="15" r="4"/><path class="fi" d="M6 32v-8l6 3zM27 32v-8l-6 3z"/></svg></button>
          <button aria-label="Collect leaders"><svg viewBox="0 0 32 32"><path class="ln" d="M4 22l9-13h5"/><circle class="ln" cx="25" cy="8" r="6"/><circle class="ln" cx="25" cy="22" r="6"/><path class="fi" d="M0 29v-9l8 4z"/></svg></button>
        </div></section>

      <section><h2>Table<svg><use href="#gear"/></svg></h2>
        <div class="cells">
          <button class="big" aria-label="Table"><svg viewBox="0 0 64 64"><path class="ln" d="M1 6h61v52H1zM1 22h61M1 34h61M1 46h61M22 22v36M42 22v36"/></svg></button>
          <button class="big" aria-label="Table style"><svg viewBox="0 0 64 64"><path class="ln" d="M34 53H1V1h55v34M56 48v5h-4M1 17h55M1 29h55M1 41h44M19 17v36M37 17v24"/><use href="#brush" x="28" y="33" width="36" height="32"/></svg></button>
          <button aria-label="Data link"><svg viewBox="0 0 32 32"><path class="fi" d="M0 20h8V3h14l10 9v17H0z"/><path stroke="#3b4453" stroke-width="9" d="M4 0v18"/><path fill="none" stroke="#f2ae86" stroke-width="2" d="M4 1c4 0 4 8 0 8s-4 8 0 8 4-8 0-8-4-8 0-8z"/><path class="fi-w" stroke="#3b4453" d="M13 16h19v16H13z"/><path stroke="#555" stroke-width="2" stroke-dasharray="4 2 6" d="M17 24h12M17 28h12"/></svg></button>
          <button aria-label="Extract data"><svg viewBox="0 0 32 32"><path class="fi" d="M0 20h8V3h14l10 9v14H0z"/><path stroke="#888" stroke-width="2" d="M11 9h10M11 14h10M11 19h10M14 8v12"/><path stroke="#3b4453" stroke-width="9" d="M4 0v18"/><path fill="none" stroke="#f2ae86" stroke-width="2" d="M4 1c4 0 4 8 0 8s-4 8 0 8 4-8 0-8-4-8 0-8z"/><path class="fi-b" stroke="#3b4453" d="M23 13h6v10h4l-7 9-7-9h4z"/></svg></button>
          <button class="c5" aria-label="Field"><svg viewBox="0 0 32 32"><path class="fi-w" d="M0 0h18v18H0z"/><path class="dash-b" d="M4 5h11M4 9h11M4 13h11"/><path class="ln-b" d="M21 12l3-10h2l3 10M22 9h6"/><path class="fi-l" d="M8 20h10v-4h14v6H8z"/><path class="fi" d="M8 24h24v8H8z"/></svg></button>
          <button aria-label="Update link"><svg viewBox="0 0 32 32"><path class="fi" d="M0 20h8V10h14l10 8v14H0z"/><path stroke="#888" stroke-width="2" d="M7 21h18M7 26h18M12 16v10M19 16v10"/><path stroke="#3b4453" stroke-width="9" d="M4 0v18"/><path fill="none" stroke="#f2ae86" stroke-width="2" d="M4 1c4 0 4 8 0 8s-4 8 0 8 4-8 0-8-4-8 0-8z"/><path fill="#3b4453" d="M15 0h17v15H15z"/><use href="#sync" x="16" width="16" height="14"/></svg></button>
        </div></section>

      <section><h2>Parametric<svg><use href="#gear"/></svg></h2>
        <div class="cells">
          <button class="big fly" aria-label="Perpendicular"><svg viewBox="0 0 64 64"><path stroke="#d4706d" stroke-width="2" d="M3 2v58"/><path fill="#d4706d" d="M0 58h6v6H0z"/><path class="ln" d="M8 61h56"/></svg></button>
          <button aria-label="Auto constrain"><svg viewBox="0 0 32 32"><path class="fi-l" d="M14 0h13v10H14z"/><path class="fi" d="M0 14h12v10H0z"/><path stroke="#d4706d" stroke-width="2" d="M13 0v24"/><use href="#bolt" x="16" y="17" width="16" height="15"/></svg></button>
          <button aria-label="Show geometric"><svg viewBox="0 0 32 32"><path class="ln-w" d="M6 1H1v26h5M22 1h5v9"/><path stroke="#d4706d" stroke-width="3" d="M7 10l10 11"/><path class="ln" d="M12 14l9-7"/><use class="cy" href="#bulb" x="19" y="14" width="14" height="18"/></svg></button>
          <button class="big fly" aria-label="Dimensional lock"><svg viewBox="0 0 64 64"><path class="ln" d="M1 2v60M63 2v60M6 14h52"/><path class="fi" d="M2 14l8-5v10zM62 14l-8-5v10z"/><path fill="none" stroke="#fbd685" stroke-width="4" d="M25 40v-6a7 7 0 0 1 14 0v6"/><path class="fi-y" fill-rule="evenodd" d="M19 39h26v20H19zM31 45v8h2v-8z"/></svg></button>
          <button aria-label="Convert dimension"><svg viewBox="0 0 32 32"><use href="#span" width="32" height="32"/><path class="ln-b" d="M14 16c-5 3-5 9 0 12"/><path fill="none" stroke="#ef5f5a" stroke-width="2" d="M18 16c5 3 5 9 0 12"/></svg></button>
          <button aria-label="Show dynamic"><svg viewBox="0 0 32 32"><use href="#span" width="28" height="32"/><path fill="#3b4453" d="M18 12h14v20H18z"/><use class="cy" href="#bulb" x="19" y="14" width="14" height="18"/></svg></button>
          <button aria-label="Show or hide"><svg viewBox="0 0 32 32"><path class="ln-w" d="M6 1H1v26h5M22 1h5v9"/><path stroke="#d4706d" stroke-width="3" d="M7 10l10 11"/><path class="ln" d="M12 14l9-7"/><use class="cy" href="#bulb" x="19" y="14" width="14" height="18"/><path fill="#8edbe2" d="M26 14a6 6 0 0 1 0 12z"/></svg></button>
          <button aria-label="Hide geometric"><svg viewBox="0 0 32 32"><path class="ln-w" d="M6 1H1v26h5M22 1h5v9"/><path stroke="#d4706d" stroke-width="3" d="M7 10l10 11"/><path class="ln" d="M12 14l9-7"/><use class="ct" href="#bulb" x="19" y="14" width="14" height="18"/></svg></button>
          <button aria-label="Toggle dynamic"><svg viewBox="0 0 32 32"><use href="#span" width="28" height="32"/><path fill="#3b4453" d="M18 12h14v20H18z"/><use class="cy" href="#bulb" x="19" y="14" width="14" height="18"/><path fill="#8edbe2" d="M26 14a6 6 0 0 1 0 12z"/></svg></button>
          <button aria-label="Hide dynamic"><svg viewBox="0 0 32 32"><use href="#span" width="28" height="32"/><path fill="#3b4453" d="M18 12h14v20H18z"/><use class="ct" href="#bulb" x="19" y="14" width="14" height="18"/></svg></button>
        </div></section>

      <section><h2>New Panel<svg><use href="#gear"/></svg></h2></section>
      <div class="tfoot">
        <button aria-label="Add panel"><svg width="22" height="22" viewBox="0 0 22 22"><path class="ln" d="M11 0v22M0 11h22"/></svg></button>
        <button aria-label="Panel list"><svg width="26" height="22" viewBox="0 0 26 22"><path class="ln" d="M5 2h21M5 8h21M5 20h21"/><path class="fi" d="M0 12h18v4H0zM20 15l3-4 3 4z"/></svg></button>
      </div>
    </aside>

    <div class="viewport">
      <svg class="scene" viewBox="0 0 2184 1540" preserveAspectRatio="xMidYMid slice" role="img" aria-label="Drawing in realistic custom view">
        <g class="faint">
          <path d="M330 602L1065 244 1540 14M330 1030L756 798 2184 90M1508 456L2184 130M250 0L840 330M640 0L870 330M1428 244L1591 414 2184 1010M1282 716L1461 904 1870 1340M1130 0L1330 200M0 740L330 1030 700 1540M1880 0L1210 540M0 150L500 0M0 1100L300 1260"/>
        </g>
        <path stroke="#3a4450" fill="none" d="M1054 1108L672 1293 170 1540M1054 1108L1180 1240"/>
        <path stroke="#35682f" fill="none" d="M0 27L1054 1108"/>
        <path stroke="#7a2a30" fill="none" d="M1054 1108L1790 747 2184 555"/>
        <g transform="translate(330 244) scale(.9311 .574)">
          <path fill="#4eac33" fill-rule="evenodd" d="M42 362L302 503 290 328 630 513 446 660 562 723V719L655 768 620 247 628 251 621 124 807 226 716 298 830 361 829 340 921 389 902 105 910 108 906 56 932 70 934 65 1207 214 1205 218 1278 259 1258 274 1391 347 1265 448 1536 595 1477 642 1538 677 1251 904 1250 887 1105 999 1088 765 983 848 1064 894 972 968 1124 1051 794 1313 780 1134 634 1249 633 1230 467 1361 446 1075 466 1084 458 959 359 1036 352 956 185 1088 172 923 117 967 112 907 82 930zM671 777L772 698 782 838zM490 934L574 868 581 984zM661 966L763 885 772 1026zM608 1161L627 1148 628 1173zM1100 411L1152 371 1153 387 1142 383 1144 436zM1129 670L1159 646 1161 670 1231 617 1238 732zM1310 552L1316 548V556zM613 1002h3v3h-3z"/>
        </g>
        <g fill="none" stroke-width="10" stroke-linecap="round">
          <path stroke="#6da75c" d="M1054 1108L1000 1052"/><path stroke="#a6e08c" stroke-width="3" d="M1052 1103L1000 1050"/>
          <path stroke="#a9504f" d="M1056 1106L1134 1069"/><path stroke="#cf7f7a" stroke-width="3" d="M1062 1104L1134 1070"/>
          <path stroke="#3c5584" d="M1054 1106V1040"/><path stroke="#5f86c9" stroke-width="3" d="M1052 1102V1040"/>
        </g>
        <g fill="none" stroke-width="1">
          <path stroke="#4f9a3c" d="M992 1018l12 12 12-12M1004 1030v11"/>
          <path stroke="#3a66dd" d="M1050 1005h25l-25 24h25"/>
          <path stroke="#c03a3a" d="M1128 1034l24 24M1152 1034l-24 24"/>
        </g>
        <g fill="none">
          <path stroke="#7d7bd8" d="M2151 414v115"/><path stroke="#8fe07f" d="M2090 428l92 96"/><path stroke="#d9716c" d="M2108 513l76-37"/>
          <rect x="2145" y="485" width="12" height="12" fill="#212830" stroke="#fff"/>
        </g>
        <g>
          <path fill="#4a4f53" fill-rule="evenodd" d="M1895 208a127 98 0 1 0 254 0 127 98 0 1 0-254 0zM1926 204a96 72 0 1 1 192 0 96 72 0 1 1-192 0z"/>
          <text class="compass" x="1950" y="144" font-size="24" transform="rotate(-30 1950 134)">N</text>
          <text class="compass" x="2112" y="168" font-size="42" transform="rotate(-58 2112 152)">E</text>
          <text class="compass" x="1916" y="266" font-size="44" transform="rotate(-28 1916 250)">W</text>
          <text class="compass" x="2094" y="294" font-size="48" transform="rotate(18 2094 276)">S</text>
          <path fill="#b4b6ba" d="M2033 81l58 54-82 40-55-60z"/>
          <path fill="#9b9da0" d="M1954 115l55 60 1 67-50-58z"/>
          <path fill="#a8aaad" d="M2009 175l82-40-5 66-76 41z"/>
          <path fill="#9aa2ae" d="M1998 162l14-7 12 8v10l-14 8-12-9z"/>
          <path fill="none" stroke="#4a4d50" stroke-dasharray="12 3" d="M2033 81l58 54-5 66-76 41-50-58-6-69zM1954 115l55 60 82-40M2009 175l1 67"/>
          <text class="face" x="2020" y="132" font-size="20" transform="rotate(-26 2020 126)">TOP</text>
          <text class="face" x="1982" y="186" font-size="15" transform="rotate(48 1982 180)">LEFT</text>
          <text class="face" x="2050" y="196" font-size="20" transform="rotate(-27 2050 189)">FRONT</text>
        </g>
      </svg>
      <div class="vlabels"><button>+</button><i></i><button>Custom View</button><i></i><button>Realistic</button></div>
      <button class="wcs">WCS<svg width="18" height="12" viewBox="0 0 18 12"><path fill="none" stroke="#2d363e" stroke-width="2" d="M1 1h16l-8 10z"/></svg></button>
      <div class="command">
        <ol class="history">
          <li>Specify a point on the XY-plane &lt;0,0,0&gt;: 0,0,2</li><li>Command:</li><li>Command:</li><li>Command:</li><li>Command:</li><li>Command:</li><li>Command:</li><li>Command:</li><li>Command:</li><li>Command:</li>
        </ol>
        <div class="entry">
          <button class="prompt" aria-label="Recent commands">&gt;_<i class="caret"></i></button>
          <input type="text" placeholder="Type a command" aria-label="Command">
          <i class="caret"></i>
          <button class="pop" aria-label="Undock"><svg width="26" height="28" viewBox="0 0 26 28"><path class="ln" d="M9 8H1v18h24V8h-8M6 8v18"/><path class="ln-b" d="M14 5v12"/><path class="fi-b" d="M9 7h10l-5-7z"/></svg></button>
        </div>
      </div>
    </div>

    <aside class="side">
      <div class="stabs">
        <button class="on" aria-label="Layers"><svg width="32" height="32" viewBox="0 0 32 32"><use href="#layers" width="28" height="26"/><circle cx="25" cy="24" r="7" fill="#d9d9d9" stroke="#3b4453"/><path stroke="#3b4453" stroke-width="2" d="M25 22v6M25 19v2"/></svg></button>
        <button aria-label="References"><svg width="32" height="32" viewBox="0 0 32 32"><path class="fi" d="M2 17h8V7h12v6h10v16H2zM25 6l7 5h-7z"/><path fill="none" stroke="#2f333f" stroke-width="6" d="M10 2v10c0 6-8 6-8 0V4"/><path class="ln" d="M10 2v10c0 6-8 6-8 0V4c0-4 5-4 5 0v8"/></svg></button>
        <button aria-label="Calculator"><svg width="28" height="28" viewBox="0 0 28 28"><path class="fi" d="M0 0h28v27H0z"/><path fill="#a9abb0" d="M0 0h28v7H0z"/><path fill="#3f434f" d="M4 9h5v5H4zM11 9h5v5h-5zM18 9h5v5h-5zM4 16h5v5H4zM11 16h5v5h-5zM18 16h5v5h-5z"/></svg></button>
        <span></span>
        <button class="fold" aria-label="Collapse">»</button>
      </div>
      <div class="panelhead first"><h2>Layers</h2><button aria-label="Undock"><svg width="28" height="28"><use href="#exit"/></svg></button></div>
      <div class="ltools">
        <button aria-label="Make current"><svg viewBox="0 0 32 32"><path class="fi-b" d="M5 11h27L22 21H0z"/><circle cx="16" cy="8" r="7" class="fi" stroke="#3b4453"/><path class="ln" d="M1 25h21l9-8M1 30h21l9-8"/></svg></button>
        <button aria-label="Match layer"><svg viewBox="0 0 32 32"><use href="#layers" width="28" height="28"/><path class="fi-y" d="M16 24l7-5 9 8-6 5z"/><path class="fi-w" d="M24 17l4 3 3-1-1 4-4 0-4-4z"/></svg></button>
        <button aria-label="Previous layer"><svg viewBox="0 0 32 32"><use href="#layers" x="2" y="6" width="30" height="26"/><path class="fi-b" stroke="#3b4453" d="M0 8l10-7v4c8 0 11 4 11 10-3-4-6-5-11-4v4z"/></svg></button>
        <button aria-label="Isolate"><svg viewBox="0 0 32 32"><use href="#layers" width="30" height="28"/><path class="ln-b" d="M1 22h17l6-5"/><path class="ln-w" d="M29 18L18 29M18 22v8h8"/></svg></button>
        <button aria-label="Unisolate"><svg viewBox="0 0 32 32"><use href="#layers" width="30" height="28"/><path class="ln-b" d="M1 22h17l6-5"/><path class="ln-w" d="M18 31l11-11M21 19h9v9"/></svg></button>
        <button aria-label="Freeze"><svg viewBox="0 0 32 32"><path class="fi" d="M12 2h18L18 14H1z"/><use class="ct" href="#snow" x="13" y="12" width="19" height="19"/></svg></button>
        <button aria-label="Off"><svg viewBox="0 0 32 32"><path class="fi" d="M12 2h18L18 14H1z"/><use class="ct" href="#bulb" x="17" y="12" width="15" height="19"/></svg></button>
        <button aria-label="Lock"><svg viewBox="0 0 32 32"><path class="fi" d="M12 2h18L18 14H1z"/><use class="ct" href="#lock" x="16" y="11" width="16" height="20"/></svg></button>
        <button aria-label="Unlock"><svg viewBox="0 0 32 32"><path class="fi" d="M12 2h18L18 14H1z"/><path class="fi-y" fill-rule="evenodd" d="M13 20h14v11H13zM19 23v5h2v-5z"/><path fill="none" stroke="#fbd685" stroke-width="2" d="M23 20v-4a3 3 0 0 1 7 0v5"/></svg></button>
      </div>
      <div class="sel current"><span class="lstate"><i class="bulb"></i><svg class="dim" width="16" height="20"><use href="#lock"/></svg><svg class="dim" width="20" height="20"><use href="#snow"/></svg><i class="swatch green"></i></span><select aria-label="Current layer"><option>planta</option></select></div>
      <div class="sel state"><select aria-label="Layer state"><option>Unsaved Layer State</option></select></div>
      <button class="hide"><svg width="18" height="12" viewBox="0 0 18 12"><path class="ln" d="M2 2l7 7 7-7"/></svg>Hide Layer List</button>
      <div class="lwrap">
        <table class="layers">
          <colgroup><col class="w1"><col class="w2"><col class="w3"><col class="w3"><col></colgroup>
          <thead><tr>
            <th><svg width="26" height="18" viewBox="0 0 26 18"><path class="fi" fill-rule="evenodd" d="M0 9C7-2 19-2 26 9 19 20 7 20 0 9zM13 3a6 6 0 1 0 .1 0z"/><circle class="fi" cx="13" cy="9" r="3"/></svg></th>
            <th class="sorted"><div><svg width="18" height="18" viewBox="0 0 18 18"><path class="ln" d="M1 1h16v16H1z"/><path class="fi" d="M1 1h16L1 17z"/></svg><span>N...</span><svg width="12" height="20" viewBox="0 0 12 20"><path class="fi" d="M1 8l5-7 5 7zM1 12l5 7 5-7z"/></svg></div></th>
            <th><svg class="c" width="20" height="20"><use href="#snow"/></svg></th>
            <th><svg class="c" width="16" height="20"><use href="#lock"/></svg></th>
            <th><svg width="18" height="16" viewBox="0 0 18 16"><path class="ln" d="M0 2h18M0 8h18M0 14h18"/></svg></th>
          </tr></thead>
          <tbody>
            <tr><td><i class="bulb"></i></td><td class="name"><i class="swatch white"></i>0</td><td></td><td></td><td>Default</td></tr>
            <tr><td><i class="bulb off"></i></td><td class="name"><i class="swatch orange"></i>corte_l</td><td></td><td></td><td>Default</td></tr>
            <tr><td><i class="bulb off"></i></td><td class="name"><i class="swatch orange"></i>corte_t</td><td></td><td></td><td>Default</td></tr>
            <tr><td><i class="bulb off"></i></td><td class="name"><i class="swatch orange"></i>Layer 1</td><td></td><td></td><td>Default</td></tr>
            <tr class="on"><td><i class="bulb"></i></td><td class="name"><i class="swatch green"></i>planta</td><td></td><td></td><td>Default</td></tr>
          </tbody>
        </table>
        <div class="hscroll"><i></i></div>
      </div>
      <div class="lfoot">
        <button aria-label="New layer"><svg viewBox="0 0 28 28"><path class="ln" d="M12 2h13L15 11H3zM2 17h14l9-8M2 23h14l9-8"/></svg></button>
        <button aria-label="Layer settings"><svg viewBox="0 0 28 28"><path class="ln" d="M10 1h13l-9 8H2zM2 15h8M2 21h6"/><path class="ln" d="M13 15h14v12H13zM16 19h2M20 19h5M16 23h2M20 23h5"/></svg></button>
        <button aria-label="Layer group"><svg viewBox="0 0 28 28"><path class="fi" d="M0 5h10l3 3h9v4H7L1 24H0zM8 13h20l-6 12H2z"/></svg></button>
        <button aria-label="Dynamic group"><svg viewBox="0 0 28 28"><path class="fi" d="M0 5h10l3 3h9v4H7L1 24H0zM8 13h20l-6 12H2z"/><path fill="#3b4453" d="M17 13l-6 6h4l-2 5 7-6h-4l2-5z"/></svg></button>
        <button class="minus" aria-label="Delete layer"><svg viewBox="0 0 28 28"><path class="ln3" d="M6 14h16"/></svg></button>
        <button class="cols" aria-label="Columns"><svg viewBox="0 0 28 28"><path class="ln" d="M4 6h18v16H4zM10 6v16M16 6v16"/></svg><i class="caret"></i></button>
      </div>
      <label class="search"><svg width="36" height="28" viewBox="0 0 36 28"><g fill="none" stroke="#222" stroke-width="2"><circle cx="11" cy="12" r="9"/><path d="M18 19l7 7M25 11l5 5 5-5"/></g></svg><input type="text" placeholder="Search for layer" aria-label="Search for layer"></label>

      <div class="panelhead props"><h2>Properties</h2><span class="seg"><button class="on">All</button><button>My</button></span><button class="dimbtn" aria-label="Edit properties"><svg width="28" height="28" viewBox="0 0 28 28"><path class="ln" d="M11 24H1V2h18v9M5 8h10M5 13h10M5 18h6"/><path class="fi" d="M12 27l2-7 8-8 6 4-9 10z"/></svg></button><button aria-label="Undock"><svg width="26" height="28"><use href="#exit"/></svg></button></div>
      <div class="sel space"><select disabled aria-label="Space"><option>Model Space</option></select></div>
      <div class="proplist">
        <i class="vscroll"></i>
        <div class="rows">
          <div class="row"><label for="p1">Layer</label><div class="sel"><select id="p1"><option>planta</option></select></div></div>
          <div class="row"><label for="p2">Linetype</label><div class="sel linetype"><select id="p2"><option>...</option></select></div></div>
          <div class="row"><label for="p3">Linetype scale</label><input id="p3" value="1"></div>
          <div class="row"><label for="p4">Lineweight</label><div class="sel"><select id="p4"><option>ByLayer</option></select></div></div>
          <div class="row"><label for="p5">Transparency</label><input id="p5" class="transp" value="0"><button class="by" aria-label="By layer"><svg width="26" height="24" viewBox="0 0 32 32"><use href="#layers"/><path class="fi-b" d="M10 2h20L20 12H1z"/></svg><i class="caret"></i></button></div>
          <h3><svg width="16" height="10" viewBox="0 0 16 10"><path fill="none" stroke="#20262f" stroke-width="3" d="M1 2l7 6 7-6"/></svg>Annotation</h3>
          <div class="row"><label for="p6">Text style</label><div class="sel"><select id="p6"><option>Standard</option></select></div></div>
          <div class="row"><label class="wide" for="p7">Dimension style</label><div class="sel"><select id="p7"><option>ISO-25</option></select></div></div>
          <div class="row"><label class="cut" for="p8">Detail View st...</label><div class="sel"><select id="p8"><option>Metric50</option></select></div></div>
          <div class="row"><label class="cut" for="p9">Multileader st...</label><div class="sel"><select id="p9"><option>Standard</option></select></div></div>
          <div class="row"><label for="p10">Section View...</label><div class="sel"><select id="p10"><option>Metric50</option></select></div></div>
          <div class="row"><label for="p11">Table style</label><div class="sel"><select id="p11"><option>Standard</option></select></div></div>
          <div class="row"><label class="cut" for="p12">Annotation sc...</label><div class="sel"><select id="p12"><option>1:1</option></select></div></div>
          <div class="row"><label for="p13">Text height</label><input id="p13" class="short" value="2.5"><button class="pick" aria-label="Pick height"><svg width="32" height="32" viewBox="0 0 32 32"><path class="ln" d="M1 1v26M29 1v10M23 15v16M15 23h16M19 20h8v6h-8z"/><path class="ln-b" d="M6 6h18"/><path class="fi-b" d="M4 6l5-4v8zM27 6l-5-4v8z"/></svg></button></div>
          <h3><svg width="16" height="10" viewBox="0 0 16 10"><path fill="none" stroke="#20262f" stroke-width="3" d="M1 2l7 6 7-6"/></svg>Plot Style</h3>
        </div>
      </div>
    </aside>

    <footer class="status">
      <div class="ltabs"><button class="on">Model</button><button class="add" aria-label="Add layout"><svg width="22" height="22" viewBox="0 0 22 22"><path class="ln" d="M11 0v22M0 11h22"/></svg></button><button>Layout1</button><button>Layout2</button></div>
      <output class="coords">27.9380,  1.8398  , 0.0000</output>
      <div class="sicons">
        <button class="on" aria-label="Grid"><svg viewBox="0 0 32 32"><path class="ln wh" d="M8 1v30M16 1v30M24 1v30M1 8h30M1 16h30M1 24h30"/></svg></button>
        <button aria-label="Snap"><svg viewBox="0 0 32 32"><path class="ln3" stroke-dasharray="4 7" d="M4 6h26M4 16h26M4 26h26"/></svg></button>
        <button aria-label="Ortho"><svg viewBox="0 0 32 32"><path class="ln" d="M1 2v28h30M1 20h10v10"/></svg></button>
        <button aria-label="Polar"><svg viewBox="0 0 32 32"><circle class="ln" cx="15" cy="17" r="12"/><path class="ln" d="M15 17h17M15 17L29 3"/></svg></button>
        <button aria-label="Lineweight"><svg viewBox="0 0 32 32"><path class="fi" d="M0 3h32v2H14v4H0zM0 12h32v2H14v4H0zM0 22h32v2H14v5H0z"/></svg></button>
        <button aria-label="Transparency"><svg viewBox="0 0 32 32"><path class="ln" d="M2 3h28v26H2z"/><path stroke="#d9d9d9" stroke-width="4" stroke-dasharray="4 4" d="M6 8h20M10 12h18M6 16h20M10 20h18M6 24h20"/></svg></button>
        <button aria-label="Selection cycling"><svg viewBox="0 0 32 32"><path class="ln" d="M6 1H2v28h4M22 1h4v10"/><path fill="none" stroke="#7edc8b" stroke-width="3" d="M9 5h9v7H9z"/><ellipse cx="13" cy="21" rx="4" ry="5" fill="none" stroke="#7edc8b" stroke-width="3"/><path class="fi-w" d="M19 13l13 13h-6l2 6-4 1-2-6-3 3z"/></svg></button>
        <button aria-label="Object snap tracking"><svg viewBox="0 0 32 32"><path class="ln" d="M1 27h30M1 27L26 4"/><path class="fi" d="M11 12h6v6h-6z"/></svg></button>
        <button aria-label="Object snap"><svg viewBox="0 0 32 32"><path class="ln" d="M14 5h17v25H5V15"/><path fill="none" stroke="#f2a77e" stroke-width="3" d="M2 2h8v8H2z"/></svg></button>
        <button class="on" aria-label="Annotation visibility"><svg class="wh" viewBox="0 0 32 32"><use href="#person" y="1" width="28" height="31"/><circle cx="26" cy="8" r="5" fill="#fff"/></svg></button>
        <button aria-label="Auto scale"><svg class="c" viewBox="0 0 32 32"><use href="#person" y="1" width="28" height="31"/><use href="#bolt" x="18" y="0" width="14" height="15"/></svg></button>
        <button aria-label="Annotation scale"><svg class="c" viewBox="0 0 32 32"><use href="#person" x="2" y="1" width="28" height="31"/></svg></button>
      </div>
      <button class="scale">1:1<i class="caret"></i></button>
      <div class="sicons last">
        <button aria-label="Isolate objects"><svg viewBox="0 0 32 32"><path class="ln" d="M1 2h12v11H1zM7 29h13l-6-11z"/><circle class="ln" cx="26" cy="12" r="5"/></svg></button>
        <button aria-label="Settings"><svg class="c" viewBox="0 0 32 32"><use href="#gear" width="32" height="32"/></svg></button>
      </div>
    </footer>
  </div>
</main>

<nav class="dock" aria-label="Dock">
  <button class="run" aria-label="Finder"><svg viewBox="0 0 72 72"><rect width="72" height="72" rx="17" fill="#e6ebf4"/><path fill="url(#gSky)" d="M17 0h25c-5 12-9 26-10 42h10c0 10 1 20 3 30H17C6 72 0 66 0 55V17C0 6 6 0 17 0z"/><path fill="none" stroke="#15284a" stroke-width="3" stroke-linecap="round" d="M20 22v6M53 22v6M15 48c10 12 32 12 43 0"/></svg></button>
  <button aria-label="Launchpad"><svg viewBox="0 0 72 72"><rect width="72" height="72" rx="17" fill="#f3e8db"/><g><rect x="12" y="13" width="13" height="13" rx="3" fill="#6bd858"/><rect x="29" y="13" width="13" height="13" rx="3" fill="#f2b746"/><rect x="46" y="13" width="13" height="13" rx="3" fill="#e98f34"/><rect x="12" y="30" width="13" height="13" rx="3" fill="#d8362f"/><rect x="29" y="30" width="13" height="13" rx="3" fill="#9a9a9c"/><rect x="46" y="30" width="13" height="13" rx="3" fill="#ea5063"/><rect x="12" y="47" width="13" height="13" rx="3" fill="#8a44d6"/><rect x="29" y="47" width="13" height="13" rx="3" fill="#409bf0"/><rect x="46" y="47" width="13" height="13" rx="3" fill="#67cf9f"/></g></svg></button>
  <button aria-label="Safari"><svg viewBox="0 0 72 72"><rect width="72" height="72" rx="17" fill="url(#gWhite)"/><circle cx="36" cy="36" r="31" fill="#3d92ea"/><circle cx="36" cy="36" r="27" fill="none" stroke="#cfe6fb" stroke-width="3" stroke-dasharray="1 3"/><path fill="#e8493f" d="M58 17L32 32l8 8z"/><path fill="#f6f6f6" d="M16 55l16-23 8 8z"/></svg></button>
  <button class="run" aria-label="Chrome"><svg viewBox="0 0 72 72"><rect width="72" height="72" rx="17" fill="#fff"/><use href="#chrome" x="4" y="4" width="64" height="64"/></svg><b class="count">1</b></button>
  <button aria-label="Messages"><svg viewBox="0 0 72 72"><rect width="72" height="72" rx="17" fill="url(#gGreen)"/><path fill="#f2fbf0" d="M36 13c16 0 27 9 27 21S52 55 36 55c-3 0-6 0-8-1-3 3-6 5-10 5 2-2 3-5 3-8-8-4-12-9-12-17 0-12 11-21 27-21z"/></svg></button>
  <button class="run" aria-label="Mail"><svg viewBox="0 0 72 72"><rect width="72" height="72" rx="17" fill="url(#gBlue)"/><rect x="11" y="20" width="50" height="32" rx="4" fill="#f0f0f0"/><path fill="none" stroke="#a5a5a5" stroke-width="2" d="M12 22l21 19c2 2 4 2 6 0l21-19M12 51l16-14M60 51L44 37"/></svg></button>
  <button class="run" aria-label="Maps"><svg viewBox="0 0 72 72"><clipPath id="mc"><rect width="72" height="72" rx="17"/></clipPath><g clip-path="url(#mc)"><path fill="#f1f0ee" d="M0 0h72v72H0z"/><path fill="#6bd164" d="M0 0h14v34L0 18zM38 0h34v60L38 28z"/><path fill="#f7cf47" d="M40 72V50l22 22z"/><path fill="#db7bc0" d="M0 28l14 16v28H0z"/><path fill="#3f7ef0" d="M19 0h15v72H19z"/><path fill="none" stroke="#eee" stroke-width="12" d="M52 0c0 16 8 24 24 26"/></g><circle cx="27" cy="45" r="18" fill="#3478f0" stroke="#fff" stroke-width="2"/><path fill="#fff" d="M27 31l9 25-9-6-9 6z"/></svg></button>
  <button aria-label="Photos"><svg viewBox="0 0 72 72"><rect width="72" height="72" rx="17" fill="#fff"/><g transform="translate(36 36)" fill-opacity=".8"><ellipse cy="-18" rx="10" ry="14" fill="#f39a38"/><ellipse cy="-18" rx="10" ry="14" fill="#f0d839" transform="rotate(45)"/><ellipse cy="-18" rx="10" ry="14" fill="#b2cf54" transform="rotate(90)"/><ellipse cy="-18" rx="10" ry="14" fill="#6db878" transform="rotate(135)"/><ellipse cy="-18" rx="10" ry="14" fill="#68a5dc" transform="rotate(180)"/><ellipse cy="-18" rx="10" ry="14" fill="#8d79cb" transform="rotate(225)"/><ellipse cy="-18" rx="10" ry="14" fill="#c673b3" transform="rotate(270)"/><ellipse cy="-18" rx="10" ry="14" fill="#ea5a4c" transform="rotate(315)"/></g></svg></button>
  <button aria-label="FaceTime"><svg viewBox="0 0 72 72"><rect width="72" height="72" rx="17" fill="url(#gGreen)"/><rect x="10" y="21" width="36" height="30" rx="8" fill="#f1fbef"/><path fill="#f1fbef" d="M49 32l12-9v26l-12-8z"/></svg></button>
  <button aria-label="Calendar"><svg viewBox="0 0 72 72"><rect width="72" height="72" rx="17" fill="#fff"/><path fill="#e4584f" d="M17 0h38c11 0 17 6 17 17v5H0v-5C0 6 6 0 17 0z"/><text x="36" y="17" font-size="15" font-weight="600" fill="#fff" text-anchor="middle">OUT.</text><text x="36" y="61" font-size="42" fill="#2b2b2b" text-anchor="middle">28</text></svg></button>
  <button aria-label="Contacts"><svg viewBox="0 0 72 72"><path fill="#67b58c" d="M68 14h6v44h-6z"/><rect width="72" height="72" rx="17" fill="#a5824f"/><g fill="none" stroke="#7d6136" stroke-width="2"><circle cx="36" cy="36" r="21"/><ellipse cx="36" cy="31" rx="8" ry="9"/><path d="M21 51c4-14 26-14 30 0"/></g></svg></button>
  <button aria-label="Reminders"><svg viewBox="0 0 72 72"><rect width="72" height="72" rx="17" fill="#fff"/><path stroke="#b8b8ba" stroke-width="2" d="M26 18h38M26 36h38M26 54h38"/><circle cx="14" cy="18" r="5" fill="#3f7ff0"/><circle cx="14" cy="36" r="5" fill="#e34a42"/><circle cx="14" cy="54" r="5" fill="#ef9a38"/></svg></button>
  <button class="run" aria-label="Notes"><svg viewBox="0 0 72 72"><rect width="72" height="72" rx="17" fill="#f6f5f2"/><path fill="#f9cf4a" d="M17 0h38c11 0 17 6 17 17v2H0v-2C0 6 6 0 17 0z"/><path stroke="#cfcfcb" stroke-width="2" d="M0 36h72M0 54h72"/><path stroke="#aaa" stroke-dasharray="2 2" stroke-width="2" d="M2 22h68"/></svg></button>
  <button class="run" aria-label="Stickies"><svg viewBox="0 0 72 72"><rect width="72" height="72" rx="17" fill="#e3cf62"/><path fill="#fbf0a0" d="M17 0h38c11 0 17 6 17 17v28L52 64H17C6 64 0 58 0 50V17C0 6 6 0 17 0z"/><path fill="none" stroke="#d3bd55" stroke-width="4" d="M12 24c4-12 8-14 8-8s-2 10 2 6 4-6 6-2l4 2h28M12 35h48M12 48h24"/></svg></button>
  <button aria-label="Freeform"><svg viewBox="0 0 72 72"><rect width="72" height="72" rx="17" fill="#fff"/><rect x="24" y="10" width="38" height="38" rx="5" fill="#5cc8f4"/><circle cx="26" cy="38" r="15" fill="#f2a35b"/><circle cx="29" cy="46" r="17" fill="#ee6055" fill-opacity=".9"/><path fill="none" stroke="#15355c" stroke-width="3" d="M13 48c4-14 12-26 16-22 3 4-10 20-6 20s12-20 16-18c3 2-7 16-3 17s9-15 13-14c2 1-3 11 0 12 4 0 8-5 12-10"/></svg></button>
  <button aria-label="TV"><svg viewBox="0 0 72 72"><rect width="72" height="72" rx="17" fill="#17211f"/><path fill="#fff" d="M24 24c0 3-2 5-5 5 0-3 2-5 5-5zM19 31c2 0 3-2 5-1 2 0 3 1 4 2-4 3-3 7 1 9-2 4-3 6-6 6l-4-1-4 1c-7-3-8-17 0-17z"/><text x="31" y="47" font-size="28" font-weight="500" fill="#fff">tv</text></svg></button>
  <button class="run" aria-label="Music"><svg viewBox="0 0 72 72"><rect width="72" height="72" rx="17" fill="url(#gRed)"/><path fill="#fff" d="M26 17l27-6v35c0 8-12 10-12 3 0-5 4-7 9-7V22l-20 4v26c0 8-13 10-13 3 0-5 4-7 9-7z"/></svg></button>
  <button aria-label="Keynote"><svg viewBox="0 0 72 72"><rect width="72" height="72" rx="17" fill="url(#gSky)"/><path fill="#f3f3f5" d="M18 10h36l4 20H14zM34 32h4v28h-4zM26 59h20v3H26z"/><circle cx="36" cy="18" r="7" fill="#6bbd6b"/><path fill="#ea5a4c" d="M36 18v-7a7 7 0 0 1 6 10z"/></svg></button>
  <button aria-label="Numbers"><svg viewBox="0 0 72 72"><rect width="72" height="72" rx="17" fill="url(#gGreen)"/><path stroke="#f3f7f3" stroke-width="8" stroke-linecap="round" d="M18 50v8M30 38v20M42 14v44M54 28v30"/></svg></button>
  <button aria-label="Pages"><svg viewBox="0 0 72 72"><rect width="72" height="72" rx="17" fill="url(#gOrange)"/><path fill="#fff" d="M52 15l5 3-34 41-10 3 5-9z"/><path stroke="#fbe0b5" stroke-width="2" d="M22 61h38"/></svg></button>
  <button aria-label="App Store"><svg viewBox="0 0 72 72"><rect width="72" height="72" rx="17" fill="url(#gSky)"/><path fill="none" stroke="#fff" stroke-width="6" stroke-linecap="round" d="M40 15L23 46M18 55l-1 2M32 15l23 42M13 45h22M47 45h12"/></svg></button>
  <button aria-label="System Settings"><svg viewBox="0 0 72 72"><rect width="72" height="72" rx="17" fill="#aeb4b8"/><circle cx="36" cy="36" r="29" fill="#34373a"/><circle cx="36" cy="36" r="26" fill="none" stroke="#9a9c9e" stroke-width="5" stroke-dasharray="2 1"/><circle cx="36" cy="36" r="19" fill="none" stroke="#a6a8aa" stroke-width="4"/><path stroke="#a6a8aa" stroke-width="4" d="M36 36h19M36 36l-10-16M36 36L26 52"/><circle cx="36" cy="36" r="6" fill="#8b8d8f"/></svg></button>
  <i class="sep"></i>
  <button class="run" aria-label="Word"><svg viewBox="0 0 72 72"><rect width="72" height="72" rx="17" fill="#fff"/><path fill="#5a9fe6" d="M20 12h40v13H20z"/><path fill="#3f76cf" d="M20 24h40v12H20z"/><path fill="#2b56b4" d="M20 36h40v12H20z"/><path fill="#1d3c87" d="M20 48h40v12H20z"/><rect x="7" y="22" width="27" height="27" rx="3" fill="#2350a8"/><text x="20" y="42" font-size="18" font-weight="700" fill="#fff" text-anchor="middle">W</text></svg></button>
  <button class="run" aria-label="Sublime Text"><svg viewBox="0 0 72 72"><rect width="72" height="72" rx="17" fill="#474748"/><path fill="#f29b33" d="M18 25l38-14v14L32 34l24 8v4L18 61V47l20-8-20-6z"/></svg></button>
  <button class="run" aria-label="PowerPoint"><svg viewBox="0 0 72 72"><rect width="72" height="72" rx="17" fill="#fff"/><circle cx="37" cy="36" r="24" fill="#c8573a"/><path fill="#ee9070" d="M37 12a24 24 0 0 1 24 24H37z"/><path fill="#dd6b4c" d="M37 12v24H14a24 24 0 0 1 23-24z"/><rect x="8" y="22" width="27" height="27" rx="3" fill="#b4432a"/><text x="21" y="42" font-size="19" font-weight="700" fill="#fff" text-anchor="middle">P</text></svg></button>
  <button class="run" aria-label="AutoCAD"><svg viewBox="0 0 72 72"><rect width="72" height="72" rx="17" fill="#fff"/><path fill="#b02048" d="M16 7l-7 9v46h9V7z"/><path fill="#d4304f" d="M16 7h44v41H16z"/><path fill="#6f1028" d="M60 16h4v48H16V48h44z"/><text x="38" y="39" font-size="33" font-weight="700" fill="#fff" text-anchor="middle">A</text><text x="39" y="61" font-size="14" font-weight="700" fill="#fff" text-anchor="middle">CAD</text></svg></button>
  <i class="sep"></i>
  <button aria-label="Editor window"><svg class="mini-window" viewBox="0 0 84 72"><path fill="#2b343d" d="M0 6h84v58H0z"/><path fill="#b9bfc4" d="M0 6h84v3H0z"/><path stroke="#46555e" stroke-width="1" stroke-dasharray="8 4 14 52" d="M8 14h44M10 18h44M12 22h44M10 26h44M8 30h44M12 34h44M10 38h44M8 42h44M12 46h44M8 50h44M10 54h44"/><rect x="58" y="50" width="25" height="26" rx="6" fill="#474748"/><path fill="#f29b33" d="M64 59l13-5v5l-8 3 8 3v2l-13 5v-5l7-3-7-2z"/></svg></button>
  <button aria-label="Browser window"><svg class="mini-window" viewBox="0 0 84 72"><path fill="#333" d="M0 12h84v48H0z"/><path fill="#e8eaf0" d="M0 12h84v5H0z"/><path fill="#555" d="M0 17h84v7H0z"/><path fill="#b4513a" d="M0 24h24v36H0z"/><path fill="#487b2f" d="M4 38h16v10H4z"/><path fill="#d7873b" d="M58 24h26v28H58z"/><path fill="#222" d="M24 24h34v36H24z"/><path fill="#86a3a8" d="M30 28h14v14H30z"/><rect x="56" y="50" width="26" height="26" rx="6" fill="#fff"/><use href="#chrome" x="58" y="52" width="22" height="22"/></svg></button>
  <button aria-label="Word window"><svg class="mini-window" viewBox="0 0 84 72"><path fill="#e9e9ec" d="M0 0h84v70H0z"/><path fill="#fff" d="M18 12h46v56H18z"/><path stroke="#a6adbd" stroke-width="2" stroke-dasharray="4 3" d="M2 4h78M2 8h78"/><path fill="#2d323c" d="M26 12h32v18H26z"/><path fill="#c7a7a0" d="M36 17h12v8H36z"/><rect x="56" y="50" width="26" height="26" rx="6" fill="#fff"/><path fill="#2b67c7" d="M62 54h16v18H62z"/><text x="68" y="68" font-size="11" font-weight="700" fill="#fff" text-anchor="middle">W</text></svg></button>
  <button aria-label="Trash"><svg viewBox="0 0 72 84"><path fill="#e6e6e6" fill-opacity=".95" d="M5 12h62l-8 66c-1 6-45 6-46 0z"/><path fill="#d6d6d6" d="M16 30l12 40-8 8-8-50zM44 40l12-6-6 40z"/><path fill="#fafafa" d="M8 8l14-8 10 6 12-6 8 4 12 6-8 12H12z"/><path fill="#71777e" d="M12 12l8 6 8-8 8 7 8-10 6 11 12-6-6 8H16z"/><ellipse cx="36" cy="14" rx="31" ry="8" fill="none" stroke="#bbb" stroke-width="2"/></svg></button>
</nav>
</body>
</html>
```

FILE: styles.css
```css
* { box-sizing: border-box; }
html, body { height: 100%; }
body {
  margin: 0;
  display: flex;
  flex-direction: column;
  min-height: 100vh;
  overflow: hidden;
  font-family: Inter, "Liberation Sans", sans-serif;
  font-size: 22px;
  color: #f0f1f3;
}
button, input, select { font: inherit; color: inherit; background: none; border: 0; padding: 0; margin: 0; border-radius: 0; }
h1, h2, h3, ol { margin: 0; padding: 0; font-weight: 400; list-style: none; }
svg { display: block; overflow: visible; flex: none; }
.defs { position: absolute; width: 0; height: 0; }
.wallpaper { position: absolute; inset: 0; width: 100%; height: 100%; z-index: -1; }

/* icon drawing styles */
.ln, .ln-b, .ln-w, .ln3 { fill: none; stroke: #d9d9d9; stroke-width: 2; }
.ln-b { stroke: #80c0ff; }
.ln-w { stroke: #fff; }
.ln3 { stroke-width: 3; }
.ln.wh { stroke: #fff; }
.dash-b { fill: none; stroke: #3d83d8; stroke-width: 2; stroke-dasharray: 3 2 12; }
.fi { fill: #d9d9d9; }
.fi-w { fill: #f6f6f6; }
.fi-b { fill: #80c0ff; }
.fi-l { fill: #95c7f6; }
.fi-y { fill: #fbd685; }
.fi-r { fill: #ef6f6a; }
.fi-t { fill: #d2ab78; }
.c { color: #d9d9d9; }
.cb { color: #80c0ff; }
.cy { color: #fbd685; }
.ct { color: #8edbe2; }
svg.wh { color: #fff; }
.mini { fill: #d9d9d9; font-weight: 500; font-family: Inter, sans-serif; }
.caret { display: inline-block; flex: none; border: 6px solid transparent; border-top: 7px solid #d9d9d9; border-bottom: 0; }

/* menu bar */
.menubar { display: flex; align-items: center; height: 74px; padding: 0 36px 0 39px; gap: 38px; background: #f5dec3; color: #0c0b0a; font-size: 25px; font-weight: 500; flex: none; }
.menubar .appname { font-size: 26px; font-weight: 700; }
.notch { width: 388px; }
.menu-extras { margin-left: auto; display: flex; align-items: center; }
.wifi { margin-left: 37px; }
.find { margin-left: 40px; }
.cc { margin-left: 28px; }
.clock { display: flex; gap: 16px; margin-left: 30px; font-size: 26px; font-weight: 400; font-variant-numeric: tabular-nums; }

/* app window */
.window { flex: 1; min-height: 0; display: flex; flex-direction: column; margin: 2px 0 0 2px; border: solid #667084; border-width: 2px 0 1px 1px; border-radius: 20px; background: #3b4453; overflow: hidden; box-shadow: 0 8px 24px rgba(0, 0, 0, .55); }
.titlebar { display: grid; grid-template-columns: 1fr auto 1fr; height: 51px; align-items: center; flex: none; }
.lights { display: flex; gap: 16px; padding-left: 15px; }
.light { width: 24px; height: 24px; border-radius: 50%; }
.close { background: radial-gradient(circle, #6b0f0b 4px, #ed6a5f 5px); }
.min { background: #f6be50; }
.max { background: #61c555; }
.title { display: flex; align-items: center; gap: 10px; font-size: 26px; font-weight: 700; color: #a3a8b1; }
.title .file { margin-left: 18px; }
.user { justify-self: end; align-self: start; display: flex; align-items: center; gap: 12px; height: 40px; padding: 0 8px 0 12px; background: #4f5a6e; border: solid #2a313c; border-width: 0 0 2px 2px; font-size: 24px; }

.toolbar { display: flex; gap: 62px; height: 61px; padding: 0 370px 8px; align-items: center; border-bottom: 2px solid #262d37; flex: none; }
.tgroup { display: flex; }
.tgroup button { position: relative; width: 66px; height: 44px; display: grid; place-items: center; }
.tgroup svg { width: 32px; height: 32px; }
.dot::after, .dot2::after { content: ""; position: absolute; width: 20px; height: 20px; border-radius: 50%; background: #e87538; border: 2px solid #fff; }
.dot::after { right: 4px; top: 1px; }
.dot2::after { right: -1px; top: -2px; }

.doctabs { display: flex; height: 46px; border-bottom: 2px solid #262d37; flex: none; }
.doctabs button { border-right: 2px solid #262d37; }
.dt-icon { width: 47px; display: grid; place-items: center; }
.dt { width: 260px; padding: 0 7px 4px; text-align: left; color: #a7abb3; }
.dt:nth-child(3) { padding-left: 10px; }
.dt.on { background: #4f5a6e; color: #fff; font-weight: 500; }

.work { flex: 1; min-height: 0; display: grid; grid-template-columns: 367px minmax(0, 1fr) 470px; grid-template-rows: minmax(0, 1fr) 47px; }

/* left tool palette */
.tools { grid-row: 1 / 3; display: flex; flex-direction: column; font-family: "Liberation Sans", Arial, sans-serif; min-height: 0; }
.ttabs { display: flex; height: 44px; font-size: 24px; flex: none; }
.ttabs button { flex: 1; background: #2f333f; border: solid #262d37; border-width: 0 0 2px 2px; color: #9ea1a8; }
.ttabs .on { background: none; border: 0; color: #fff; }
.ttabs .fold { flex: none; width: 48px; background: none; }
.tools section { margin: 0 8px 0 7px; border-bottom: 2px solid #262d37; flex: none; }
.tools h2 { display: flex; align-items: center; height: 43px; padding-top: 2px; font-size: 20px; font-weight: 400; }
.tools h2::before { content: ""; border: 8px solid transparent; border-top: 8px solid #f4f4f4; border-bottom: 0; margin: 2px 10px 0 1px; }
.tools h2 svg { width: 20px; height: 20px; margin: 0 2px 0 auto; }
.cells { display: grid; grid-template-columns: repeat(8, 44px); grid-template-rows: 44px 44px; grid-auto-rows: 48px; padding-bottom: 11px; }
.cells button { position: relative; display: grid; place-items: center; }
.cells svg { width: 32px; height: 32px; }
.cells .big { grid-column: span 2; grid-row: span 2; }
.cells .big svg { width: 64px; height: 64px; }
.cells .c5 { grid-column: 5; }
.fly::after { content: ""; position: absolute; right: 0; bottom: 2px; border: 4px solid #a0a1a4; border-top-color: transparent; border-left-color: transparent; }
.big.fly::after { right: 2px; bottom: 0; }
.tfoot { display: flex; gap: 35px; padding: 26px 30px; }

/* drawing area */
.viewport { position: relative; background: #212830; overflow: hidden; }
.scene { position: absolute; inset: 0; width: 100%; height: 100%; }
.faint { fill: none; stroke: #2a2c38; }
.compass { fill: #b9bbbd; font-family: "Liberation Sans", sans-serif; font-weight: 700; text-anchor: middle; }
.face { fill: #55585c; font-family: "Liberation Sans", sans-serif; font-weight: 700; text-anchor: middle; }
.vlabels { position: relative; display: flex; align-items: center; gap: 13px; padding: 0 31px; height: 44px; font-family: "Noto Sans", sans-serif; font-size: 24px; color: #a3a6a9; }
.vlabels i { width: 2px; height: 26px; background: #8f9396; }
.vlabels i:nth-child(2) { margin-left: 10px; }
.wcs { position: absolute; right: 112px; top: 338px; display: flex; align-items: center; gap: 16px; width: 100px; height: 24px; padding: 0 8px; border-radius: 8px; background: #667478; color: #2d363e; font-family: "Liberation Sans", sans-serif; font-size: 20px; }
.command { position: absolute; left: 592px; right: 592px; bottom: 0; display: flex; flex-direction: column; font-family: "Noto Sans", sans-serif; color: #b4b7bb; font-size: 20px; }
.history { position: relative; margin-left: 80px; height: 310px; padding: 10px; background: #3b4453; line-height: 30px; }
.history::after { content: ""; position: absolute; right: 11px; bottom: 4px; width: 8px; height: 40px; border-radius: 4px; background: #9a9da2; }
.entry { display: flex; align-items: center; height: 50px; padding: 0 20px 0 16px; background: #3b4453; }
.prompt { display: flex; align-items: center; width: 74px; gap: 6px; font-family: "Liberation Mono", monospace; font-size: 22px; color: #c5c7ca; }
.entry input { flex: 1; font-style: italic; font-size: 23px; outline: 0; }
.entry input::placeholder { color: #9ea1a6; }
.entry > .caret { margin-right: 24px; border-top-color: #a3a6aa; }

/* right side panels */
.side { display: flex; flex-direction: column; background: #3b4453; min-height: 0; color: #e9eaec; }
.stabs { display: flex; height: 44px; flex: none; }
.stabs > * { width: 105px; display: grid; place-items: center; background: #2f333f; border: solid #262d37; border-width: 0 0 2px 2px; }
.stabs .on { background: none; border: 0; }
.stabs .fold { width: 48px; background: none; color: #9ea1a8; }
.fold { font-family: "Liberation Sans", sans-serif; font-size: 26px; }
.stabs span { flex: 1; }
.panelhead { display: flex; align-items: center; margin: 0 23px 0 21px; height: 36px; flex: none; }
.panelhead h2 { flex: 1; font-size: 23px; font-weight: 500; }
.ltools { display: flex; height: 84px; padding: 10px 18px 0 20px; align-items: center; flex: none; }
.ltools button { width: 48px; display: grid; place-items: center; }
.ltools svg { width: 32px; height: 32px; }
.sel { position: relative; display: flex; align-items: center; background: #4f5a6e; border: 2px solid #2f3f42; border-radius: 5px; }
.sel select { appearance: none; flex: 1; height: 100%; width: 100%; outline: 0; opacity: 1; }
.sel::after { content: ""; position: absolute; right: 8px; top: calc(50% - 4px); border: 6px solid transparent; border-top: 8px solid #d9d9d9; border-bottom: 0; }
.current { height: 54px; margin: 0 13px 0 19px; flex: none; font-weight: 500; }
.lstate { display: flex; align-items: center; gap: 16px; padding: 0 24px 0 18px; }
.dim { color: #6c7689; }
.bulb { display: inline-block; width: 16px; height: 16px; border-radius: 50%; background: #d9d9d9; }
.bulb.off { background: none; border: 2px solid #6c7689; }
.swatch { display: inline-block; width: 18px; height: 18px; border: 2px solid #0c0d0f; background: #fff; }
.swatch.green { background: #63f23f; }
.swatch.orange { background: #f09a37; }
.state { height: 54px; margin: 2px 15px 0 21px; flex: none; font-weight: 500; }
.state select { padding-left: 11px; }
.hide { display: flex; align-items: center; gap: 23px; height: 54px; padding: 0 0 3px 27px; color: #d0d2d6; flex: none; }
.lwrap { margin: 0 19px 0 21px; border: 1px solid #333b48; height: 302px; flex: none; background: linear-gradient(#4f5a6e 267px, #262d37 267px, #262d37 269px, transparent 269px); }
.layers { width: 100%; table-layout: fixed; border-collapse: collapse; font-weight: 500; }
.w1 { width: 63px; }
.w2 { width: 115px; }
.w3 { width: 44px; }
.layers th { height: 48px; padding: 0; background: #2f333f; border-right: 1px solid #262d37; border-bottom: 2px solid #262d37; }
.layers th > svg { margin: auto; }
.layers th.sorted { background: #4f5a6e; position: relative; }
.sorted div { display: flex; align-items: center; gap: 14px; padding-left: 8px; font-size: 21px; }
.sorted::after { content: ""; position: absolute; left: 50px; bottom: 0; border: 6px solid transparent; border-bottom: 8px solid #4a90e8; border-top: 0; }
.layers td { height: 38px; padding: 0; }
.layers td:first-child { padding-left: 28px; line-height: 0; }
.layers td:last-child { padding-left: 14px; }
.name .swatch { margin-right: 18px; vertical-align: -2px; margin-left: -1px; }
.layers .on { background: #3e80b1; }
.hscroll { padding: 43px 6px 0; }
.hscroll i { display: block; width: 74%; height: 10px; border-radius: 5px; background: #8a909b; }
.lfoot { display: flex; align-items: center; height: 50px; padding: 0 16px 0 36px; gap: 32px; flex: none; }
.lfoot button { display: flex; align-items: center; }
.lfoot svg { width: 28px; height: 28px; }
.minus { margin-left: auto; }
.cols { gap: 2px; }
.search { display: flex; align-items: center; gap: 10px; height: 41px; margin: 0 20px 17px 22px; padding-left: 8px; border-radius: 10px; background: #fff; flex: none; }
.search input { flex: 1; min-width: 0; outline: 0; font-size: 24px; color: #222; }
.search input::placeholder { color: #b9b9b9; }
.props { margin: 0; padding: 0 23px 0 21px; height: 34px; border-top: 2px solid #262d37; }
.seg { display: flex; border: 2px solid #2f333f; margin-right: 20px; font-size: 16px; height: 27px; }
.seg button { width: 56px; color: #7d8490; }
.seg .on { width: 61px; background: #4f5a6e; color: #fff; font-weight: 600; }
.dimbtn { opacity: .5; margin-right: 13px; }
.space { height: 42px; margin: 15px 18px 0 20px; background: #444c5d; border-color: #3a4351; flex: none; color: #7f8693; }
.space select { padding-left: 11px; }
.space::after { border-top-color: #7f8693; }
.proplist { position: relative; flex: 1; min-height: 0; margin-top: 9px; overflow: hidden; }
.vscroll { position: absolute; right: 18px; top: 43px; width: 10px; height: 203px; border-radius: 5px; background: #8a909b; }
.rows { margin-top: -25px; padding-right: 42px; }
.row { display: flex; align-items: center; justify-content: flex-end; height: 46px; font-size: 21px; }
.row label { margin-right: 20px; color: #d0d2d6; }
.row label.wide { margin-right: 8px; }
.row label.cut { margin-right: 14px; }
.row .sel, .row > input { width: 168px; height: 37px; font-weight: 500; }
.row select { padding-left: 12px; }
.row > input { background: #4f5a6e; border: 2px solid #2f3f42; border-radius: 4px; padding: 2px 6px 0; outline: 0; }
.row .short { width: 124px; }
.row .transp { width: 79px; height: 33px; text-align: right; border-radius: 0; border-left: 2px dotted #4a90e8; }
.by { display: flex; align-items: center; justify-content: flex-end; gap: 14px; width: 78px; height: 37px; margin-left: 6px; padding-right: 8px; background: #4f5a6e; border: 2px solid #2f3f42; border-radius: 4px; }
.pick { width: 40px; height: 37px; margin-left: 4px; padding-left: 2px; border: 2px solid #2f3f42; border-radius: 4px; overflow: hidden; }
.linetype select { padding-left: 106px; }
.linetype::before { content: ""; position: absolute; left: 13px; top: 15px; width: 65px; height: 2px; background: #fff; }
.rows h3 { display: flex; align-items: center; gap: 24px; height: 62px; padding-left: 26px; font-size: 21px; font-weight: 700; color: #d4d6da; }

/* status bar */
.status { grid-column: 2 / 4; display: flex; align-items: center; border-top: 2px solid #262d37; background: linear-gradient(#3c4554, #384050); color: #b9bcc1; padding-right: 8px; }
.ltabs { display: flex; align-self: stretch; margin-right: auto; }
.ltabs button { width: 118px; border-right: 2px solid #262d37; padding-bottom: 4px; font-size: 21px; }
.ltabs .on { width: 121px; background: #4f5a6e; color: #fff; font-weight: 500; }
.ltabs .add { width: 46px; display: grid; place-items: center; }
.coords { display: flex; align-items: center; align-self: stretch; border-left: 2px solid #262d37; padding: 0 6px 0 14px; white-space: pre; font-variant-numeric: tabular-nums; }
.sicons { display: flex; gap: 4px; }
.sicons button { width: 40px; height: 40px; display: grid; place-items: center; }
.sicons .on { background: #668bbd; }
.sicons svg { width: 32px; height: 32px; }
.scale { display: flex; align-items: center; gap: 10px; font-size: 21px; margin-right: 12px; }

/* dock */
.dock { position: relative; display: flex; height: 110px; margin: 20px 74px 10px 76px; padding: 0 6px 0 0; border-radius: 34px; border: 2px solid #f3dcc0; flex: none;
  background: linear-gradient(90deg, #ecbd88 0 3%, #e2d8cb 9% 27%, #ecbd88 31% 35%, #e2d8cb 40% 46%, #ecbd88 49% 52%, #e2d8cb 57% 66%, #ecbd88 69% 73%, #e2d8cb 78%); }
.dock button { position: relative; flex: 1; display: flex; justify-content: center; padding-top: 14px; }
.dock svg { width: 72px; height: 72px; }
.dock .mini-window { width: 84px; }
.sep { width: 40px; background: linear-gradient(#a99b8b, #a99b8b) center / 2px 82px no-repeat; }
.run::after { content: ""; position: absolute; bottom: 4px; width: 7px; height: 7px; border-radius: 50%; background: #5b4a36; }
.count { position: absolute; right: -2px; bottom: 11px; width: 36px; height: 36px; border: 4px solid #3b74e0; border-radius: 50%; background: #eef3fc; color: #333; font-size: 18px; font-weight: 400; line-height: 28px; text-align: center; }
```
